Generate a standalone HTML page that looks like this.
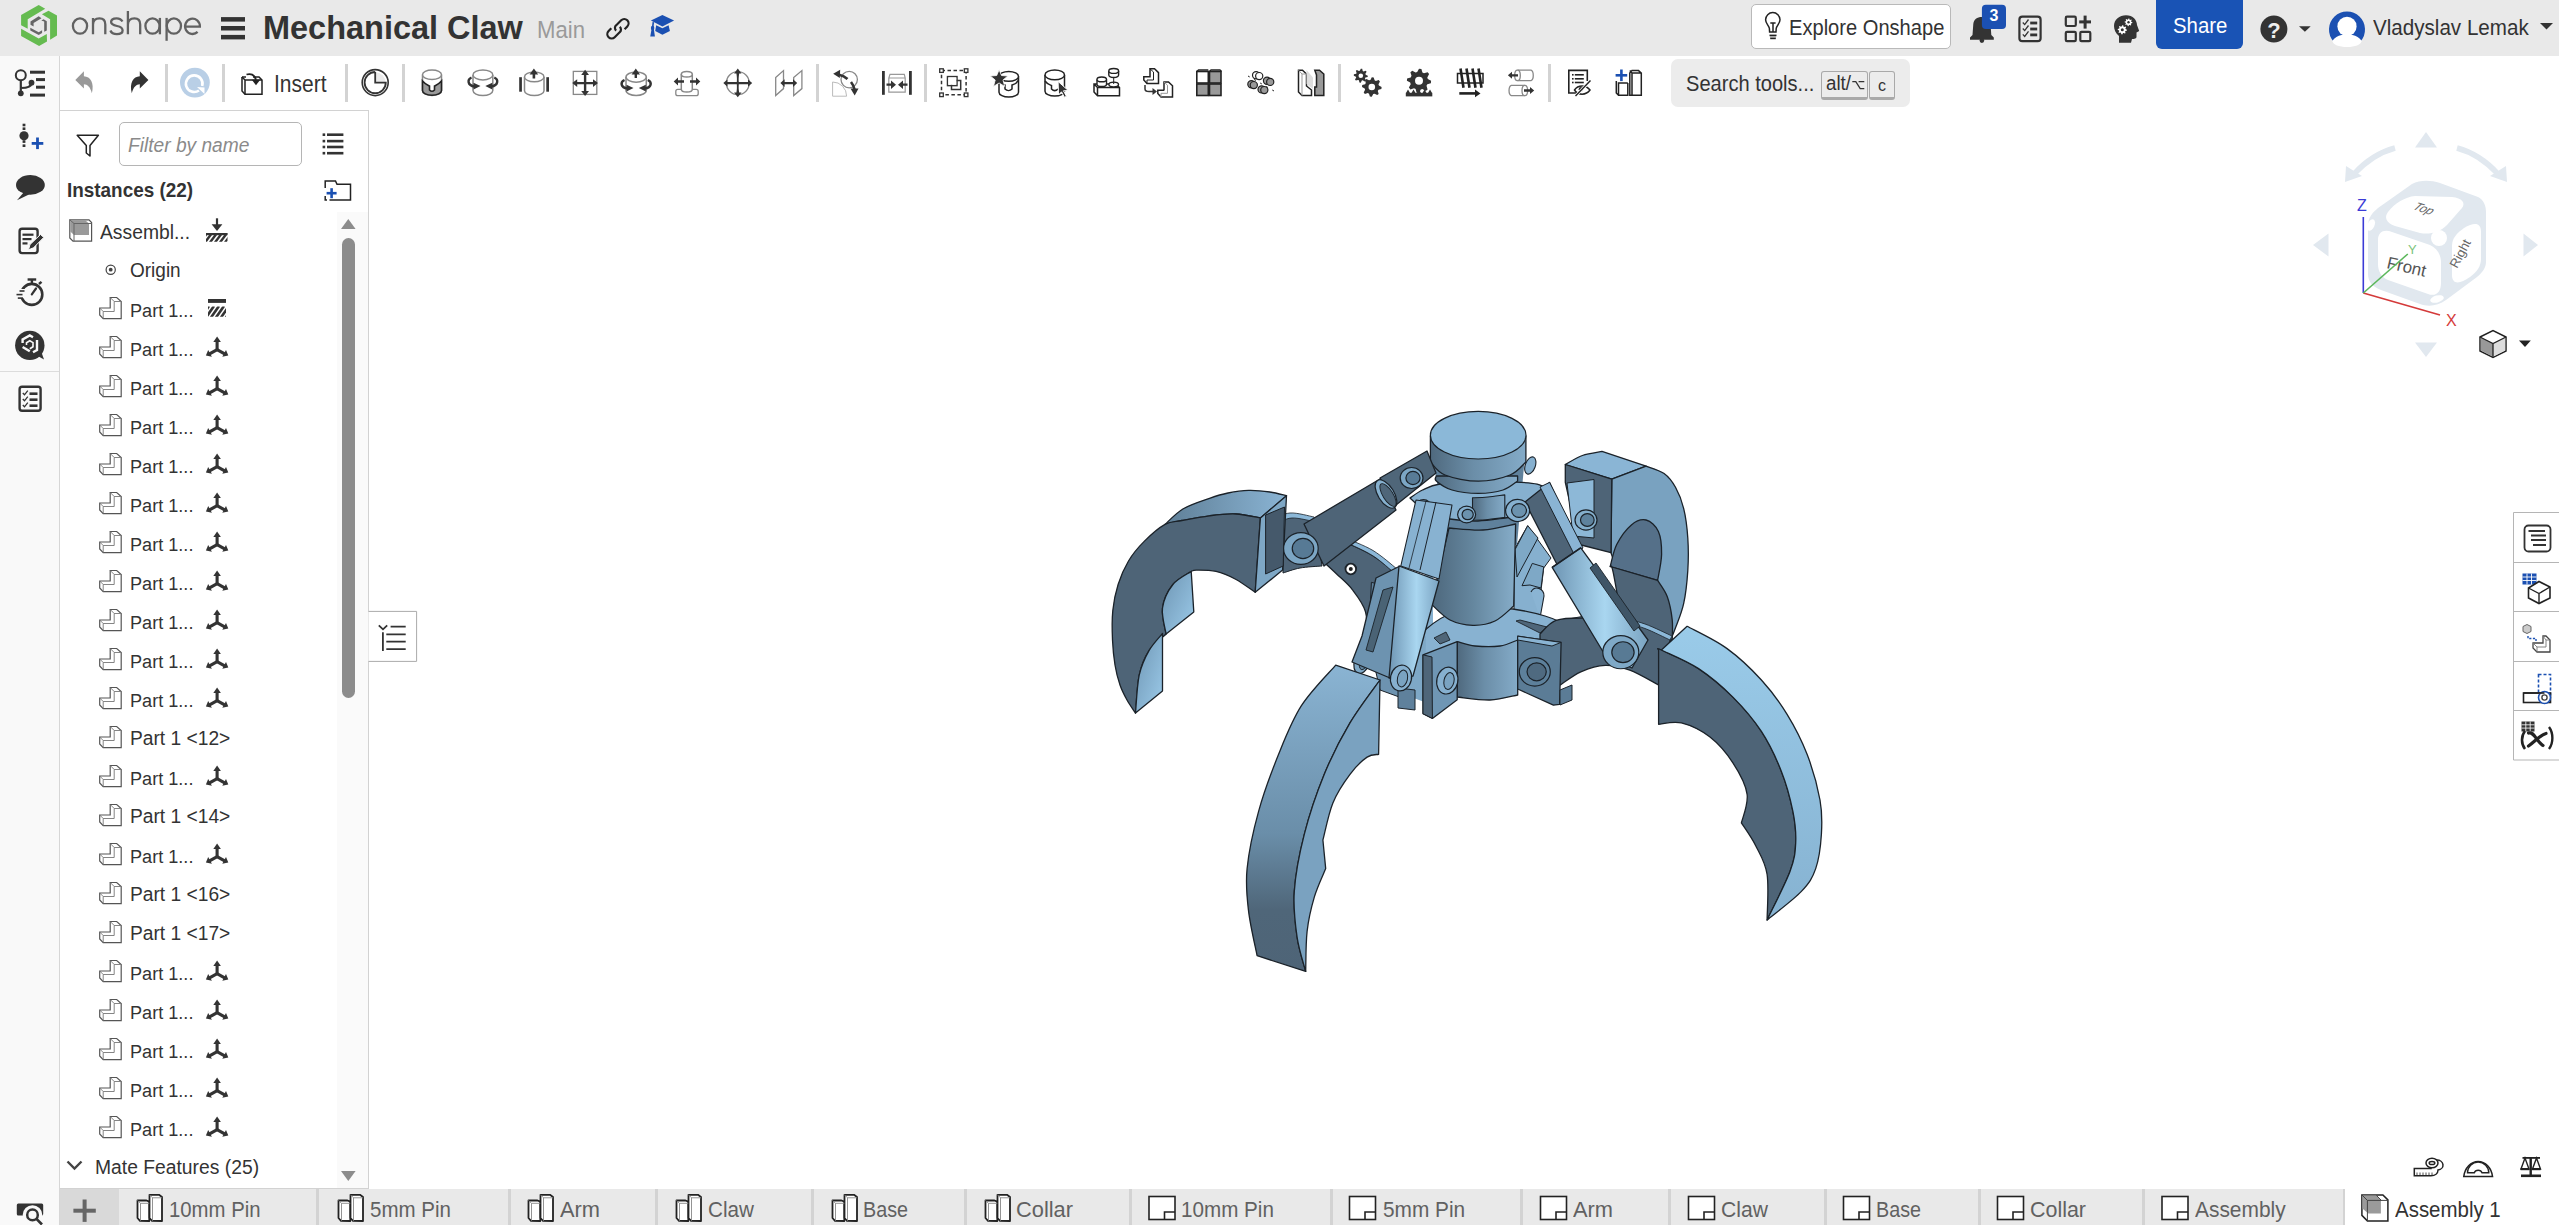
<!DOCTYPE html>
<html><head><meta charset="utf-8">
<style>
*{box-sizing:border-box;margin:0;padding:0}
html,body{width:2559px;height:1225px;overflow:hidden;background:#fff;font-family:"Liberation Sans",sans-serif;color:#333;position:relative}
.a{position:absolute;display:block}
.t{position:absolute;white-space:nowrap;line-height:1;transform-origin:0 0}
</style></head><body>
<div class="a" style="left:0px;top:0px;width:2559px;height:56px;background:#e9e9e9"></div>
<div class="a" style="left:0px;top:56px;width:60px;height:1169px;background:#f9f9f9;border-right:1px solid #d6d6d6"></div>
<div class="a" style="left:0px;top:371px;width:59px;height:1px;background:#dcdcdc"></div>
<div class="a" style="left:60px;top:110px;width:309px;height:1079px;border-top:1px solid #d2d2d2;border-right:1px solid #d2d2d2;border-bottom:1px solid #d2d2d2;background:#fff"></div>
<div class="a" style="left:337px;top:212px;width:31px;height:976px;background:#fafafa"></div>
<div class="a" style="left:60px;top:1189px;width:2499px;height:36px;background:#e9e9e9"></div>
<div class="a" style="left:60px;top:1189px;width:59px;height:36px;background:#d9d9d9"></div>
<div class="a" style="left:165px;top:64px;width:3px;height:38px;background:#d3d3d3"></div>
<div class="a" style="left:222px;top:64px;width:3px;height:38px;background:#d3d3d3"></div>
<div class="a" style="left:345px;top:64px;width:3px;height:38px;background:#d3d3d3"></div>
<div class="a" style="left:402px;top:64px;width:3px;height:38px;background:#d3d3d3"></div>
<div class="a" style="left:816px;top:64px;width:3px;height:38px;background:#d3d3d3"></div>
<div class="a" style="left:924px;top:64px;width:3px;height:38px;background:#d3d3d3"></div>
<div class="a" style="left:1338px;top:64px;width:3px;height:38px;background:#d3d3d3"></div>
<div class="a" style="left:1548px;top:64px;width:3px;height:38px;background:#d3d3d3"></div>
<div class="t" style="left:263.00px;top:10.75px;font-size:32.99px;color:#333;font-weight:bold;font-style:normal;transform:scaleX(0.9844);">Mechanical Claw</div>
<div class="t" style="left:537.00px;top:18.14px;font-size:24.27px;color:#9a9a9a;font-weight:normal;font-style:normal;transform:scaleX(0.9121);">Main</div>
<div class="t" style="left:273.50px;top:72.41px;font-size:23.84px;color:#333;font-weight:normal;font-style:normal;transform:scaleX(0.8806);">Insert</div>
<div class="a" style="left:1671px;top:59px;width:239px;height:48px;background:#ececec;border-radius:7px"></div>
<div class="t" style="left:1686.40px;top:72.62px;font-size:22.53px;color:#333;font-weight:normal;font-style:normal;transform:scaleX(0.8916);">Search tools...</div>
<div class="a" style="left:1821px;top:71px;width:47px;height:29px;background:#ececec;border:1px solid #a9a9a9;border-bottom:3px solid #a9a9a9;border-radius:3px"></div>
<div class="t" style="left:1825.70px;top:73.93px;font-size:19.33px;color:#333;font-weight:normal;font-style:normal;transform:scaleX(0.9694);">alt/</div>
<div class="a" style="left:1869px;top:71px;width:26px;height:29px;background:#ececec;border:1px solid #a9a9a9;border-bottom:3px solid #a9a9a9;border-radius:3px"></div>
<div class="t" style="left:1878.00px;top:76.51px;font-size:16.28px;color:#333;font-weight:normal;font-style:normal;transform:scaleX(0.9829);">c</div>
<div class="a" style="left:1751px;top:4px;width:200px;height:45px;background:#fff;border:1px solid #b9b9b9;border-radius:5px"></div>
<div class="t" style="left:1788.60px;top:17.24px;font-size:22.38px;color:#333;font-weight:normal;font-style:normal;transform:scaleX(0.8985);">Explore Onshape</div>
<div class="a" style="left:2156px;top:0px;width:87px;height:49px;background:#1953b5;border-radius:0 0 6px 6px"></div>
<div class="t" style="left:2172.60px;top:15.04px;font-size:22.38px;color:#fff;font-weight:normal;font-style:normal;transform:scaleX(0.9109);">Share</div>
<div class="t" style="left:2373.00px;top:16.64px;font-size:22.38px;color:#333;font-weight:normal;font-style:normal;transform:scaleX(0.9206);">Vladyslav Lemak</div>
<div class="a" style="left:119px;top:122px;width:183px;height:44px;border:1px solid #b5b5b5;border-radius:5px;background:#fff"></div>
<div class="t" style="left:128.00px;top:136.46px;font-size:19.77px;color:#8a8a8a;font-weight:normal;font-style:italic;transform:scaleX(0.9694);">Filter by name</div>
<div class="t" style="left:66.60px;top:180.00px;font-size:20.78px;color:#333;font-weight:bold;font-style:normal;transform:scaleX(0.9097);">Instances (22)</div>
<div class="t" style="left:99.70px;top:221.96px;font-size:20.35px;color:#333;font-weight:normal;font-style:normal;transform:scaleX(0.9485);">Assembl...</div>
<div class="t" style="left:130.00px;top:261.30px;font-size:19.48px;color:#333;font-weight:normal;font-style:normal;transform:scaleX(0.9757);">Origin</div>
<div class="t" style="left:130.30px;top:300.55px;font-size:19.19px;color:#333;font-weight:normal;font-style:normal;transform:scaleX(0.9439);">Part 1...</div>
<div class="t" style="left:130.30px;top:339.55px;font-size:19.19px;color:#333;font-weight:normal;font-style:normal;transform:scaleX(0.9439);">Part 1...</div>
<div class="t" style="left:130.30px;top:378.55px;font-size:19.19px;color:#333;font-weight:normal;font-style:normal;transform:scaleX(0.9439);">Part 1...</div>
<div class="t" style="left:130.30px;top:417.55px;font-size:19.19px;color:#333;font-weight:normal;font-style:normal;transform:scaleX(0.9439);">Part 1...</div>
<div class="t" style="left:130.30px;top:456.55px;font-size:19.19px;color:#333;font-weight:normal;font-style:normal;transform:scaleX(0.9439);">Part 1...</div>
<div class="t" style="left:130.30px;top:495.55px;font-size:19.19px;color:#333;font-weight:normal;font-style:normal;transform:scaleX(0.9439);">Part 1...</div>
<div class="t" style="left:130.30px;top:534.55px;font-size:19.19px;color:#333;font-weight:normal;font-style:normal;transform:scaleX(0.9439);">Part 1...</div>
<div class="t" style="left:130.30px;top:573.55px;font-size:19.19px;color:#333;font-weight:normal;font-style:normal;transform:scaleX(0.9439);">Part 1...</div>
<div class="t" style="left:130.30px;top:612.55px;font-size:19.19px;color:#333;font-weight:normal;font-style:normal;transform:scaleX(0.9439);">Part 1...</div>
<div class="t" style="left:130.30px;top:651.55px;font-size:19.19px;color:#333;font-weight:normal;font-style:normal;transform:scaleX(0.9439);">Part 1...</div>
<div class="t" style="left:130.30px;top:690.55px;font-size:19.19px;color:#333;font-weight:normal;font-style:normal;transform:scaleX(0.9439);">Part 1...</div>
<div class="t" style="left:129.60px;top:729.26px;font-size:19.77px;color:#333;font-weight:normal;font-style:normal;transform:scaleX(0.9709);">Part 1 &lt;12&gt;</div>
<div class="t" style="left:130.30px;top:768.55px;font-size:19.19px;color:#333;font-weight:normal;font-style:normal;transform:scaleX(0.9439);">Part 1...</div>
<div class="t" style="left:129.60px;top:807.26px;font-size:19.77px;color:#333;font-weight:normal;font-style:normal;transform:scaleX(0.9709);">Part 1 &lt;14&gt;</div>
<div class="t" style="left:130.30px;top:846.55px;font-size:19.19px;color:#333;font-weight:normal;font-style:normal;transform:scaleX(0.9439);">Part 1...</div>
<div class="t" style="left:129.60px;top:885.26px;font-size:19.77px;color:#333;font-weight:normal;font-style:normal;transform:scaleX(0.9709);">Part 1 &lt;16&gt;</div>
<div class="t" style="left:129.60px;top:924.26px;font-size:19.77px;color:#333;font-weight:normal;font-style:normal;transform:scaleX(0.9709);">Part 1 &lt;17&gt;</div>
<div class="t" style="left:130.30px;top:963.55px;font-size:19.19px;color:#333;font-weight:normal;font-style:normal;transform:scaleX(0.9439);">Part 1...</div>
<div class="t" style="left:130.30px;top:1002.55px;font-size:19.19px;color:#333;font-weight:normal;font-style:normal;transform:scaleX(0.9439);">Part 1...</div>
<div class="t" style="left:130.30px;top:1041.55px;font-size:19.19px;color:#333;font-weight:normal;font-style:normal;transform:scaleX(0.9439);">Part 1...</div>
<div class="t" style="left:130.30px;top:1080.55px;font-size:19.19px;color:#333;font-weight:normal;font-style:normal;transform:scaleX(0.9439);">Part 1...</div>
<div class="t" style="left:130.30px;top:1119.55px;font-size:19.19px;color:#333;font-weight:normal;font-style:normal;transform:scaleX(0.9439);">Part 1...</div>
<div class="t" style="left:95.20px;top:1158.33px;font-size:19.91px;color:#333;font-weight:normal;font-style:normal;transform:scaleX(0.9692);">Mate Features (25)</div>
<div class="a" style="left:342px;top:238px;width:13px;height:460px;background:#8c8c8c;border-radius:7px"></div>
<div class="t" style="left:168.70px;top:1200.08px;font-size:21.51px;color:#616161;font-weight:normal;font-style:normal;transform:scaleX(0.9458);">10mm Pin</div>
<div class="a" style="left:316px;top:1189px;width:3px;height:36px;background:#d3d3d3"></div>
<div class="t" style="left:370.00px;top:1200.08px;font-size:21.51px;color:#616161;font-weight:normal;font-style:normal;transform:scaleX(0.9545);">5mm Pin</div>
<div class="a" style="left:508px;top:1189px;width:3px;height:36px;background:#d3d3d3"></div>
<div class="t" style="left:560.00px;top:1200.08px;font-size:21.51px;color:#616161;font-weight:normal;font-style:normal;transform:scaleX(1.0144);">Arm</div>
<div class="a" style="left:655px;top:1189px;width:3px;height:36px;background:#d3d3d3"></div>
<div class="t" style="left:708.00px;top:1200.08px;font-size:21.51px;color:#616161;font-weight:normal;font-style:normal;transform:scaleX(0.9606);">Claw</div>
<div class="a" style="left:811px;top:1189px;width:3px;height:36px;background:#d3d3d3"></div>
<div class="t" style="left:863.00px;top:1200.08px;font-size:21.51px;color:#616161;font-weight:normal;font-style:normal;transform:scaleX(0.9179);">Base</div>
<div class="a" style="left:964px;top:1189px;width:3px;height:36px;background:#d3d3d3"></div>
<div class="t" style="left:1016.00px;top:1200.08px;font-size:21.51px;color:#616161;font-weight:normal;font-style:normal;transform:scaleX(1.0144);">Collar</div>
<div class="a" style="left:1129px;top:1189px;width:3px;height:36px;background:#d3d3d3"></div>
<div class="t" style="left:1181.00px;top:1200.08px;font-size:21.51px;color:#616161;font-weight:normal;font-style:normal;transform:scaleX(0.9603);">10mm Pin</div>
<div class="a" style="left:1330px;top:1189px;width:3px;height:36px;background:#d3d3d3"></div>
<div class="t" style="left:1382.60px;top:1200.08px;font-size:21.51px;color:#616161;font-weight:normal;font-style:normal;transform:scaleX(0.9686);">5mm Pin</div>
<div class="a" style="left:1520px;top:1189px;width:3px;height:36px;background:#d3d3d3"></div>
<div class="t" style="left:1573.00px;top:1200.08px;font-size:21.51px;color:#616161;font-weight:normal;font-style:normal;transform:scaleX(1.0144);">Arm</div>
<div class="a" style="left:1668px;top:1189px;width:3px;height:36px;background:#d3d3d3"></div>
<div class="t" style="left:1721.00px;top:1200.08px;font-size:21.51px;color:#616161;font-weight:normal;font-style:normal;transform:scaleX(0.9815);">Claw</div>
<div class="a" style="left:1824px;top:1189px;width:3px;height:36px;background:#d3d3d3"></div>
<div class="t" style="left:1876.00px;top:1200.08px;font-size:21.51px;color:#616161;font-weight:normal;font-style:normal;transform:scaleX(0.9179);">Base</div>
<div class="a" style="left:1978px;top:1189px;width:3px;height:36px;background:#d3d3d3"></div>
<div class="t" style="left:2030.00px;top:1200.08px;font-size:21.51px;color:#616161;font-weight:normal;font-style:normal;transform:scaleX(0.9966);">Collar</div>
<div class="a" style="left:2142px;top:1189px;width:3px;height:36px;background:#d3d3d3"></div>
<div class="t" style="left:2195.00px;top:1200.08px;font-size:21.51px;color:#616161;font-weight:normal;font-style:normal;transform:scaleX(0.9726);">Assembly</div>
<div class="a" style="left:2343px;top:1189px;width:3px;height:36px;background:#d3d3d3"></div>
<div class="a" style="left:2345px;top:1189px;width:214px;height:36px;background:#fff"></div>
<div class="t" style="left:2395.20px;top:1200.08px;font-size:21.51px;color:#333;font-weight:normal;font-style:normal;transform:scaleX(0.9517);">Assembly 1</div>
<svg class="a" style="left:0;top:0" width="2559" height="60" viewBox="0 0 2559 60"><polygon fill="#65bb50" points="21.1,15.1 38.7,4.9 45.2,8.8 27.7,19.2 27.7,28.8 21.1,25.3"/><polygon fill="#65bb50" points="41.9,14.3 48.5,10.8 57.0,15.5 57.0,35.5 50.1,39.8 50.1,19.2"/><polygon fill="#65bb50" points="21.1,28.8 38.7,38.4 46.8,33.9 47.0,41.6 39.1,46.1 21.1,35.9"/><polygon fill="#666" points="30.5,21.6 38.7,16.3 41.5,18.2 33.6,22.9 33.6,26.5 30.5,24.7"/><polygon fill="#666" points="41.3,20.6 43.6,19.2 46.8,21.2 46.8,30.4 44.2,31.8 44.2,21.6"/><polygon fill="#666" points="30.3,27.8 38.7,32.2 42.1,30.2 42.1,33.1 38.7,35.1 30.3,30.4"/><g fill="none" stroke="#616161" stroke-width="2.3"><ellipse cx="80" cy="26.05" rx="7.1" ry="7.65"/><path d="M93,34.3 L93,17.9 M93,24.8 C93,20.3 96,18.4 99.5,18.4 C103,18.4 105.3,20.5 105.3,24.5 L105.3,34.3"/><path d="M122.4,21.6 C121.4,19.4 119.3,18.3 116.6,18.3 C113.3,18.3 111.1,19.7 111.1,22 C111.1,24.6 113.9,25.3 117,26 C120.3,26.7 122.6,27.8 122.6,30.5 C122.6,33 120.3,34.1 116.9,34.1 C113.7,34.1 111.3,32.8 110.4,30.5"/><path d="M127.9,11 L127.9,34.3 M127.9,24.8 C127.9,20.3 131,18.4 134.5,18.4 C138,18.4 140.2,20.5 140.2,24.5 L140.2,34.3"/><ellipse cx="152.5" cy="26.05" rx="7.1" ry="7.65"/><path d="M159.9,17.9 L159.9,34.3"/><ellipse cx="173.9" cy="26.05" rx="7.1" ry="7.65"/><path d="M166.6,17.9 L166.6,40.8"/><path d="M185.1,26.6 L199.9,26.6 A7.4,7.65 0 1 0 197.6,31.9"/></g><rect x="221" y="17.1" width="24" height="4.5" fill="#333"/><rect x="221" y="26" width="24" height="4.5" fill="#333"/><rect x="221" y="34.9" width="24" height="4.5" fill="#333"/><g fill="none" stroke="#222" stroke-width="2.2" stroke-linecap="butt"><path d="M624.6,29.2 L627.3,26.4 A4.3,4.3 0 0 0 621.2,20.3 L616.3,25.2 A3.4,3.4 0 0 0 616.2,30.6"/><path d="M611.3,28.3 L608.6,31.1 A4.3,4.3 0 0 0 614.7,37.2 L619.6,32.3 A3.4,3.4 0 0 0 619.7,26.9"/></g><polygon fill="#1b50b2" points="650.9,20.4 662.4,14.9 674.1,20.4 662.4,26.4"/><polygon fill="#1b50b2" points="656.2,25.3 662.4,28.3 668.6,25.3 669.9,30.9 662.4,34.8 655.2,30.9"/><path d="M653.3,22.2 L652.6,28 L651.2,35.8 L654,35.8 L652.9,28" stroke="#1b50b2" stroke-width="1.6" fill="#1b50b2"/><ellipse cx="652.6" cy="28" rx="1.7" ry="2.2" fill="#1b50b2"/><g fill="none" stroke="#222" stroke-width="1.5"><path d="M1769.6,32 L1769.4,28.5 C1769,25.5 1765.6,23.5 1765.6,19.8 A7.2,7.2 0 0 1 1780,19.8 C1780,23.5 1776.6,25.5 1776.2,28.5 L1776,32 Z"/><path d="M1770.3,23 L1775.6,23 M1773,23 L1773,32"/></g><rect x="1769.5" y="34.6" width="7" height="1.6" fill="#222"/><rect x="1770" y="36.3" width="6" height="1.3" fill="#999"/><rect x="1770.2" y="37.7" width="5.6" height="1.5" fill="#222"/><path d="M1970,39.7 L1970,37.5 L1972.5,35 L1973.3,24 C1973.8,19.5 1977,17 1981.9,17 C1986.8,17 1990,19.5 1990.5,24 L1991.3,35 L1993.8,37.5 L1993.8,39.7 Z" fill="#333"/><circle cx="1981.9" cy="40.6" r="2.3" fill="#333"/><rect x="1981.9" y="4.8" width="24.1" height="24.2" rx="4" fill="#1b50b2"/><text x="1994" y="21" font-family="Liberation Sans" font-weight="bold" font-size="16" fill="#fff" text-anchor="middle">3</text><rect x="2019.4" y="16.7" width="21.2" height="24.5" rx="3" fill="none" stroke="#333" stroke-width="2.2"/><path d="M2022.8,22.5 L2024.7,24.6 L2028.5,19.5" fill="none" stroke="#333" stroke-width="1.3"/><rect x="2030.2" y="21.6" width="7" height="2.8" fill="#333"/><path d="M2022.8,28.5 L2024.7,30.6 L2028.5,25.5" fill="none" stroke="#333" stroke-width="1.3"/><rect x="2030.2" y="27.6" width="7" height="2.8" fill="#333"/><path d="M2022.8,34.4 L2024.7,36.5 L2028.5,31.4" fill="none" stroke="#333" stroke-width="1.3"/><rect x="2030.2" y="33.5" width="7" height="2.8" fill="#333"/><rect x="2065.7999999999997" y="16.7" width="10" height="9.3" rx="1.2" fill="none" stroke="#333" stroke-width="2.2"/><rect x="2065.7999999999997" y="31.900000000000002" width="10" height="9.3" rx="1.2" fill="none" stroke="#333" stroke-width="2.2"/><rect x="2080.2999999999997" y="31.900000000000002" width="10" height="9.3" rx="1.2" fill="none" stroke="#333" stroke-width="2.2"/><rect x="2079.2" y="20.4" width="11.8" height="3" fill="#333"/><rect x="2083.6" y="15.6" width="3" height="13" fill="#333"/><path d="M2119,42.7 L2119,36 C2115.5,33 2114,29.5 2114,26 C2114,19.5 2119.5,15.2 2126,15.2 C2133,15.2 2137,20 2137,25 L2139.2,31 L2136.5,32.5 L2136.5,37 C2136.5,38.5 2134.5,39 2132,39 L2131,42.7 Z" fill="#333"/><polygon fill="#fff" points="2126.9,29.8 2126.8,30.7 2125.4,31.1 2125.1,31.7 2125.6,33.1 2124.9,33.6 2123.6,32.9 2123.0,33.1 2122.3,34.4 2121.4,34.3 2121.0,32.9 2120.4,32.6 2119.0,33.1 2118.5,32.4 2119.2,31.1 2119.0,30.5 2117.7,29.8 2117.8,28.9 2119.2,28.5 2119.5,27.9 2119.0,26.5 2119.7,26.0 2121.0,26.7 2121.6,26.5 2122.3,25.2 2123.2,25.3 2123.6,26.7 2124.2,27.0 2125.6,26.5 2126.1,27.2 2125.4,28.5 2125.6,29.1"/><circle cx="2122.3" cy="29.8" r="1.5" fill="#333"/><polygon fill="#fff" points="2132.4,22.3 2132.3,23.1 2131.1,23.4 2130.8,23.9 2131.3,25.1 2130.7,25.5 2129.6,24.9 2129.0,25.0 2128.5,26.2 2127.7,26.1 2127.4,24.9 2126.9,24.6 2125.7,25.1 2125.3,24.5 2125.9,23.4 2125.8,22.8 2124.6,22.3 2124.7,21.5 2125.9,21.2 2126.2,20.7 2125.7,19.5 2126.3,19.1 2127.4,19.7 2128.0,19.6 2128.5,18.4 2129.3,18.5 2129.6,19.7 2130.1,20.0 2131.3,19.5 2131.7,20.1 2131.1,21.2 2131.2,21.8"/><circle cx="2128.5" cy="22.3" r="1.2" fill="#333"/><circle cx="2273.9" cy="29" r="13.5" fill="#333"/><text x="2274" y="37.5" font-family="Liberation Sans" font-weight="bold" font-size="22" fill="#eee" text-anchor="middle">?</text><polygon fill="#333" points="2299,26.2 2310.7,26.2 2304.9,31.8"/><clipPath id="avc"><circle cx="2347" cy="28.3" r="18"/></clipPath><path d="M2333.5,41.5 A18,18 0 1 1 2360.5,41.5 Z" fill="#1b50b2"/><circle cx="2347" cy="26.4" r="9.6" fill="#fff"/><path d="M2332.3,41 C2334.5,37.5 2338,35.5 2341.5,35 L2352.5,35 C2356,35.5 2359.5,37.5 2361.7,41 C2361,44.8 2355,47 2347,47 C2339,47 2333,44.8 2332.3,41 Z" fill="#fff"/><polygon fill="#333" points="2540,23 2553,23 2546.5,29.4"/></svg>
<svg class="a" style="left:0;top:56px" width="1700" height="1169" viewBox="0 56 1700 1169"><circle cx="20.8" cy="75.3" r="5" fill="none" stroke="#333" stroke-width="2"/><path d="M20.8,80.3 L20.8,93 M20.8,88 C25,88 31.5,87 31.5,82.7" fill="none" stroke="#333" stroke-width="2.2"/><circle cx="20.8" cy="93.3" r="2.9" fill="#333"/><circle cx="31.5" cy="82.7" r="2.9" fill="#333"/><rect x="30" y="70.7" width="15" height="3" fill="#333"/><rect x="36" y="78.1" width="9" height="3" fill="#333"/><rect x="36" y="85.7" width="9" height="3" fill="#333"/><rect x="30" y="93.6" width="15" height="3" fill="#333"/><rect x="22.6" y="123.7" width="2.8" height="2.6" fill="#333"/><rect x="22.6" y="127.4" width="2.8" height="2.6" fill="#333"/><rect x="22.6" y="140.3" width="2.8" height="2.6" fill="#333"/><rect x="22.6" y="144.4" width="2.8" height="2.6" fill="#333"/><circle cx="24" cy="135.8" r="4.6" fill="#333"/><rect x="31.7" y="142" width="11.6" height="2.8" fill="#1b50b2"/><rect x="36.1" y="137.5" width="2.8" height="11.6" fill="#1b50b2"/><ellipse cx="30.4" cy="184.9" rx="14.4" ry="9.8" fill="#333"/><path d="M24,192 L17,200.2 L30,194 Z" fill="#333"/><rect x="19.6" y="228.7" width="18" height="24.4" rx="2.5" fill="none" stroke="#333" stroke-width="2.4"/><rect x="22.5" y="233.6" width="11" height="2.2" fill="#333"/><rect x="22.5" y="238" width="9" height="2.2" fill="#333"/><rect x="22.5" y="242.3" width="5" height="2.2" fill="#333"/><path d="M28.5,249.8 L30,244.5 L40.5,234.5 L43.8,237.4 L33.5,247.8 Z" fill="#333" stroke="#f9f9f9" stroke-width="1"/><circle cx="31.8" cy="294.4" r="10.5" fill="none" stroke="#333" stroke-width="2.6"/><rect x="27.6" y="278.3" width="8.6" height="2.4" fill="#333"/><rect x="30.7" y="279.5" width="2.4" height="4" fill="#333"/><path d="M39,284 L41.5,281.8" stroke="#333" stroke-width="2.4"/><path d="M31.8,294.4 L36,288.5" stroke="#333" stroke-width="2.2" stroke-linecap="round"/><rect x="14" y="289" width="12" height="9" fill="#f9f9f9"/><rect x="19.5" y="290.2" width="5.0" height="1.6" fill="#333"/><rect x="16.5" y="293.8" width="6.0" height="1.6" fill="#333"/><rect x="17.8" y="297.3" width="5.199999999999999" height="1.6" fill="#333"/><circle cx="29.8" cy="345.4" r="14.7" fill="#333"/><path d="M36,355 L44,359.6 L41,351 Z" fill="#333"/><g fill="none" stroke="#f9f9f9" stroke-width="2.4"><path d="M22.6,343 L22.6,339.5 L29.8,335.4 L33,337.2"/><path d="M37,340 L37,350 L33,352.2"/><path d="M22.6,347 L29.8,351.3"/></g><g fill="none" stroke="#f9f9f9" stroke-width="1.6"><path d="M26.5,345 L26.5,342.8 L29.8,340.8 L33,342.6 L33,346.8 L29.8,348.8"/></g><rect x="19.6" y="386.7" width="21" height="24" rx="2.5" fill="none" stroke="#333" stroke-width="2.4"/><path d="M22.8,393 L24.5,394.8 L27.8,390.6" fill="none" stroke="#333" stroke-width="1.3"/><rect x="29.5" y="392.4" width="8" height="2.6" fill="#333"/><path d="M22.8,399 L24.5,400.8 L27.8,396.6" fill="none" stroke="#333" stroke-width="1.3"/><rect x="29.5" y="398.4" width="8" height="2.6" fill="#333"/><path d="M22.8,405 L24.5,406.8 L27.8,402.6" fill="none" stroke="#333" stroke-width="1.3"/><rect x="29.5" y="404.4" width="8" height="2.6" fill="#333"/><rect x="16.8" y="1203.6" width="26.4" height="11.8" rx="1.5" fill="#333"/><circle cx="32.5" cy="1215" r="9.8" fill="#f9f9f9"/><circle cx="32.5" cy="1214.9" r="5.3" fill="none" stroke="#333" stroke-width="2.5"/><path d="M36.2,1218.6 L42,1224.5" stroke="#333" stroke-width="2.7"/><path d="M75.3,79.9 L83.9,71.3 L83.9,76.2 C90.5,76.5 94.5,83 91.9,93.2 C90.2,87 87.5,84.3 83.9,84.3 L83.9,88.6 Z" fill="#999"/><path d="M75.3,79.9 L83.9,71.3 L83.9,76.2 C90.5,76.5 94.5,83 91.9,93.2 C90.2,87 87.5,84.3 83.9,84.3 L83.9,88.6 Z" fill="#333" transform="translate(223.7,0) scale(-1,1)"/><circle cx="194.9" cy="82.6" r="14.9" fill="#b9cfe6"/><path d="M199,90.5 A8.3,8.3 0 1 1 202.2,86" fill="none" stroke="#fff" stroke-width="2.6"/><polygon fill="#fff" points="197,87 204.5,94 204.5,87.5"/><g fill="none" stroke="#222" stroke-width="1.5"><path d="M242,77 L242,91 L245,94.2 L262,94.2 L262,80 L259,77 L253,77"/><path d="M245,94.2 L245,80 L242,77 M245,80 L262,80"/><path d="M246,77 L242,77"/></g><path d="M246.5,74.5 C250.5,73.3 254.5,74.3 256,79.8" fill="none" stroke="#222" stroke-width="1.8"/><polygon fill="#222" points="251.8,79.8 260.2,79.8 256,85.3"/><circle cx="375.2" cy="82.6" r="13" fill="none" stroke="#333" stroke-width="1.6"/><path d="M375.2,72.2 A10.4,10.4 0 0 1 385.6,82.6 L375.2,82.6 Z" fill="#eaeaea"/><path d="M375.2,72 L375.2,82.6 L385.8,82.6 A10.6,10.6 0 1 1 375.2,72" fill="none" stroke="#333" stroke-width="1.8"/><path d="M422.5,74.75 L422.5,90.75 A9.5,4.75 0 0 0 441.5,90.75 L441.5,74.75" fill="#fff" stroke="#888" stroke-width="1.5"/><ellipse cx="432.0" cy="74.75" rx="9.5" ry="4.75" fill="#fff" stroke="#888" stroke-width="1.5"/><path d="M422.5,81 L422.5,90.5 A9.5,4.8 0 0 0 441.5,90.5 L441.5,81 C439,84 436.5,85 434.5,86 L434.5,90 C433,91.5 431,91.5 429.5,90 L429.5,86 C427.5,85 425,84 422.5,81 Z" fill="#999" stroke="#222" stroke-width="1.6"/><path d="M473,74.95 L473,90.55 A9.900000000000006,4.950000000000003 0 0 0 492.8,90.55 L492.8,74.95" fill="#fff" stroke="#888" stroke-width="1.5"/><ellipse cx="482.9" cy="74.95" rx="9.900000000000006" ry="4.950000000000003" fill="#fff" stroke="#888" stroke-width="1.5"/><path d="M471.5,77.5 C467,79.5 467.5,85.5 474.5,86.5" fill="none" stroke="#333" stroke-width="2.4"/><polygon fill="#333" points="473.5,82.8 480.5,86 473.5,89.6"/><path d="M494.3,77.5 C498.8,79.5 498.3,85.5 491.3,86.5" fill="none" stroke="#333" stroke-width="2.4"/><polygon fill="#333" points="492.3,82.8 485.3,86 492.3,89.6"/><path d="M524.5,76.875 L524.5,90.625 A9.75,4.875 0 0 0 544,90.625 L544,76.875" fill="#fff" stroke="#888" stroke-width="1.5"/><ellipse cx="534.25" cy="76.875" rx="9.75" ry="4.875" fill="#fff" stroke="#888" stroke-width="1.5"/><rect x="519.2" y="77.2" width="2.7" height="14.5" fill="#333"/><rect x="546.3" y="77.2" width="2.7" height="14.5" fill="#333"/><polygon fill="#333" points="533.9,68.6 538.2,74.5 535.2,74.5 535.2,78.4 532.6,78.4 532.6,74.5 529.6,74.5"/><rect x="573.3" y="71.4" width="23.5" height="23" fill="none" stroke="#888" stroke-width="1.3"/><path d="M585.1,69.8 L589,75 L586.3,75 L586.3,81.9 L593,81.9 L593,79.2 L598,83.1 L593,87 L593,84.3 L586.3,84.3 L586.3,91 L589,91 L585.1,96 L581.2,91 L583.9,91 L583.9,84.3 L577.2,84.3 L577.2,87 L572.2,83.1 L577.2,79.2 L577.2,81.9 L583.9,81.9 L583.9,75 L581.2,75 Z" fill="#333"/><path d="M626,77.07499999999999 L626,90.42500000000001 A10.149999999999977,5.074999999999989 0 0 0 646.3,90.42500000000001 L646.3,77.07499999999999" fill="#fff" stroke="#888" stroke-width="1.5"/><ellipse cx="636.15" cy="77.07499999999999" rx="10.149999999999977" ry="5.074999999999989" fill="#fff" stroke="#888" stroke-width="1.5"/><path d="M624.5,80 C620,82 620.5,87.5 627.5,88.5" fill="none" stroke="#333" stroke-width="2.4"/><polygon fill="#333" points="626.5,84.8 633.5,88 626.5,91.6"/><path d="M647.8,80 C652.3,82 651.8,87.5 644.8,88.5" fill="none" stroke="#333" stroke-width="2.4"/><polygon fill="#333" points="645.8,84.8 638.8,88 645.8,91.6"/><polygon fill="#333" points="635.8,68.6 640,74.5 637,74.5 637,78 634.6,78 634.6,74.5 631.6,74.5"/><rect x="675.8" y="89.4" width="22.4" height="6.3" rx="2" fill="#fff" stroke="#888" stroke-width="1.3"/><path d="M681.3,74.25 L681.3,89.25 A5.5,2.75 0 0 0 692.3,89.25 L692.3,74.25" fill="#fff" stroke="#888" stroke-width="1.5"/><ellipse cx="686.8" cy="74.25" rx="5.5" ry="2.75" fill="#fff" stroke="#888" stroke-width="1.5"/><polygon fill="#333" points="673.7,81.5 678,77.6 678,80.2 684,80.2 684,82.8 678,82.8 678,85.4"/><polygon fill="#333" points="700.3,81.5 696,77.6 696,80.2 690,80.2 690,82.8 696,82.8 696,85.4"/><circle cx="737.8" cy="83.1" r="11.5" fill="none" stroke="#888" stroke-width="1.3"/><path d="M737.8,68.6 L741.5,73.5 L739.2,73.5 C738.6,77 738.6,80 738.8,81.9 L748,81.9 L748,79.5 L752.2,83.1 L748,86.7 L748,84.3 L738.8,84.3 C738.6,87 738.6,90 739.2,92.5 L741.5,92.5 L737.8,97.2 L734.1,92.5 L736.4,92.5 C737,90 737,87 736.8,84.3 L727.5,84.3 L727.5,86.7 L723.3,83.1 L727.5,79.5 L727.5,81.9 L736.8,81.9 C737,80 737,77 736.4,73.5 L734.1,73.5 Z" fill="#333"/><polygon fill="none" stroke="#888" stroke-width="1.3" points="775.7,77.6 783.5,70.6 783.5,88.6 775.7,95.6"/><polygon fill="none" stroke="#888" stroke-width="1.3" points="793.7,77.6 801.9,70.6 801.9,88.6 793.7,95.6"/><path d="M780.4,83.1 L784.6,79.2 L784.6,81.9 L793,81.9 L793,79.2 L797.2,83.1 L793,87 L793,84.3 L784.6,84.3 L784.6,87 Z" fill="#333"/><path d="M832.6,96.2 L832.6,82 A14,14 0 0 1 846.6,96.2 Z" fill="none" stroke="#bbb" stroke-width="1"/><circle cx="849.2" cy="79.6" r="8.2" fill="none" stroke="#888" stroke-width="1.3"/><path d="M838.5,74.5 C843,75.5 845.5,77 847.5,79" fill="none" stroke="#333" stroke-width="2.6"/><polygon fill="#333" points="833.2,73.7 840.2,69.8 839.8,78"/><path d="M851,82 C853,84.5 854,86.5 854.5,89.5" fill="none" stroke="#333" stroke-width="2.6"/><polygon fill="#333" points="850.5,88.5 858.5,88.5 854.7,95.6"/><rect x="882" y="71" width="2.8" height="23.8" fill="#333"/><rect x="909" y="71" width="2.8" height="23.8" fill="#333"/><path d="M888.8,92.2 L888.8,78 L890,74.3 L904.3,74.3 L905.2,78 L905.2,92.2 Z M888.8,78 L905.2,78" fill="#fff" stroke="#999" stroke-width="1.2"/><polygon fill="#333" points="886.5,83.6 891,83.6 891,80.5 896,84.7 891,88.9 891,85.8 886.5,85.8"/><polygon fill="#333" points="907.5,83.6 903,83.6 903,80.5 898,84.7 903,88.9 903,85.8 907.5,85.8"/><rect x="941.5" y="70.6" width="24.6" height="24.2" fill="none" stroke="#333" stroke-width="1.5" stroke-dasharray="3.5,2.5"/><rect x="939.7" y="68.8" width="3.6" height="3.6" fill="#fff" stroke="#333" stroke-width="1.3"/><rect x="964.3000000000001" y="68.8" width="3.6" height="3.6" fill="#fff" stroke="#333" stroke-width="1.3"/><rect x="939.7" y="93.0" width="3.6" height="3.6" fill="#fff" stroke="#333" stroke-width="1.3"/><rect x="964.3000000000001" y="93.0" width="3.6" height="3.6" fill="#fff" stroke="#333" stroke-width="1.3"/><rect x="947.5" y="76.6" width="9.5" height="9" fill="#fff" stroke="#333" stroke-width="1.5"/><rect x="951.5" y="80.5" width="9.2" height="9" fill="none" stroke="#333" stroke-width="1.5"/><rect x="948.3" y="77.4" width="8" height="7.4" fill="#fff"/><path d="M999,76.375 L999,92.125 A9.75,4.875 0 0 0 1018.5,92.125 L1018.5,76.375" fill="#fff" stroke="#222" stroke-width="1.5"/><ellipse cx="1008.75" cy="76.375" rx="9.75" ry="4.875" fill="#fff" stroke="#222" stroke-width="1.5"/><path d="M999,80 C1001,84 1003.5,84.5 1005,85 L1005,89 C1007,91 1010,91 1012,89 L1012,85 C1014,84.5 1016.5,84 1018.5,80" fill="none" stroke="#222" stroke-width="1.5"/><polygon fill="#333" stroke="#fff" stroke-width="0.8" points="999.1,69.8 1001.5,75.5 1007.9,76 1003,80 1004.7,86.4 999.1,83 993.5,86.4 995.2,80 990.3,76 996.7,75.5"/><path d="M1045,74.875 L1045,91.125 A9.75,4.875 0 0 0 1064.5,91.125 L1064.5,74.875" fill="#fff" stroke="#222" stroke-width="1.5"/><ellipse cx="1054.75" cy="74.875" rx="9.75" ry="4.875" fill="#fff" stroke="#222" stroke-width="1.5"/><path d="M1045,81 C1047.5,84.5 1050,85 1051.5,85.5 L1051.5,89 C1053.5,91 1056,91 1058,89" fill="none" stroke="#222" stroke-width="1.5"/><polygon fill="#333" stroke="#fff" stroke-width="1" points="1058.1,81.5 1068.3,90.5 1063.5,90.8 1066.5,96.4 1064.3,97.2 1061.5,91.8 1058.5,95"/><path d="M1094,84 L1094,92 L1097.5,95.7 L1119.5,95.7 L1119.5,87.5 L1116,84 Z M1097.5,95.7 L1097.5,87.5 L1094,84 M1097.5,87.5 L1119.5,87.5" fill="#fff" stroke="#222" stroke-width="1.5"/><path d="M1097,79.375 L1097,84.125 A4.75,2.375 0 0 0 1106.5,84.125 L1106.5,79.375" fill="#fff" stroke="#222" stroke-width="1.4"/><ellipse cx="1101.75" cy="79.375" rx="4.75" ry="2.375" fill="#fff" stroke="#222" stroke-width="1.4"/><ellipse cx="1113.7" cy="84.5" rx="4.8" ry="2.4" fill="#fff" stroke="#222" stroke-width="1.4"/><path d="M1113.7,77 L1113.7,84" stroke="#222" stroke-width="1"/><path d="M1108.8,70.94999999999999 L1108.8,75.05000000000001 A4.899999999999977,2.4499999999999886 0 0 0 1118.6,75.05000000000001 L1118.6,70.94999999999999" fill="#fff" stroke="#222" stroke-width="1.4"/><ellipse cx="1113.6999999999998" cy="70.94999999999999" rx="4.899999999999977" ry="2.4499999999999886" fill="#fff" stroke="#222" stroke-width="1.4"/><path d="M1150,77.5 L1150,68.8 L1154.5,68.8 L1158.5,72.6 L1158.5,83.5 L1147,83.5 L1143.8,80 L1143.8,76.8 L1150,76.8" fill="#fff" stroke="#222" stroke-width="1.5"/><path d="M1147,83.5 L1147,80 L1153.5,80 L1153.5,72 L1150,68.8" fill="none" stroke="#222" stroke-width="1"/><path d="M1164,90.5 L1164,82 L1168.5,82 L1172.5,85.8 L1172.5,97 L1161,97 L1157.8,93.5 L1157.8,90.2 L1164,90.2" fill="#fff" stroke="#222" stroke-width="1.5"/><path d="M1161,97 L1161,93.3 L1167.5,93.3 L1167.5,85.2 L1164,82" fill="none" stroke="#999" stroke-width="1"/><path d="M1145,85 L1145,89 C1145,91 1147,91.5 1149,91.5 L1153,91.5" fill="none" stroke="#333" stroke-width="1.5"/><polygon fill="#333" points="1152.5,88 1157,91.5 1152.5,95"/><g stroke="#222" stroke-width="1.6"><rect x="1196.8" y="71.5" width="11.5" height="11.5" fill="#fff"/><rect x="1209.5" y="71.5" width="11.5" height="11.5" fill="#999"/><rect x="1196.8" y="84" width="11.5" height="11.5" fill="#999"/><rect x="1209.5" y="84" width="11.5" height="11.5" fill="#999"/></g><path d="M1196.8,71.5 L1198.5,70 L1208.3,70 M1209.5,71.5 L1211,70 L1220,70 L1221.5,71.5" fill="none" stroke="#222" stroke-width="1.3"/><circle cx="1256.1" cy="75.3" r="3.6" fill="#fff" stroke="#222" stroke-width="1.2"/><circle cx="1259.2" cy="76.1" r="3.6" fill="#fff" stroke="#222" stroke-width="1.2"/><circle cx="1251.4" cy="84.3" r="3.6" fill="#999" stroke="#222" stroke-width="1.2"/><circle cx="1253.8" cy="85.1" r="3.6" fill="#999" stroke="#222" stroke-width="1.2"/><circle cx="1267" cy="80.8" r="3.6" fill="#999" stroke="#222" stroke-width="1.2"/><circle cx="1270.2" cy="81.9" r="3.6" fill="#999" stroke="#222" stroke-width="1.2"/><circle cx="1261.6" cy="89.4" r="3.6" fill="#999" stroke="#222" stroke-width="1.2"/><circle cx="1264.3" cy="90.1" r="3.6" fill="#999" stroke="#222" stroke-width="1.2"/><path d="M1248,76 L1274,91" stroke="#222" stroke-width="1" stroke-dasharray="2,5"/><path d="M1298.5,70.2 L1302.5,70.2 L1306.5,74 L1306.5,86 L1311.5,90 L1311.5,95.6 L1302,95.6 L1298.5,92 Z" fill="#fff" stroke="#222" stroke-width="1.5"/><path d="M1302,95.6 L1302,74 L1298.5,70.2 M1302,74 L1306.5,74" fill="none" stroke="#999" stroke-width="1"/><polygon fill="#ddd" points="1306.5,70 1313,77.5 1313,89 1306.5,84"/><path d="M1314.8,70.2 L1319.5,70.2 L1323.8,74 L1323.8,95.6 L1314.8,95.6 L1314.8,87 L1316.5,87 L1316.5,75 Z" fill="#999" stroke="#222" stroke-width="1.5"/><polygon fill="#333" points="1367.8,75.7 1367.7,77.1 1365.4,77.6 1365.0,78.5 1365.7,80.6 1364.7,81.5 1362.7,80.3 1361.8,80.6 1360.8,82.7 1359.4,82.6 1358.9,80.3 1358.0,79.9 1355.9,80.6 1355.0,79.6 1356.2,77.6 1355.9,76.7 1353.8,75.7 1353.9,74.3 1356.2,73.8 1356.6,72.9 1355.9,70.8 1356.9,69.9 1358.9,71.1 1359.8,70.8 1360.8,68.7 1362.2,68.8 1362.7,71.1 1363.6,71.5 1365.7,70.8 1366.6,71.8 1365.4,73.8 1365.7,74.7"/><circle cx="1360.8" cy="75.7" r="2.3" fill="#fff"/><polygon fill="#333" points="1381.6,87.0 1381.4,88.9 1378.5,89.8 1377.8,91.0 1378.7,93.9 1377.2,95.1 1374.6,93.7 1373.2,94.1 1371.8,96.8 1369.9,96.6 1369.0,93.7 1367.8,93.0 1364.9,93.9 1363.7,92.4 1365.1,89.8 1364.7,88.4 1362.0,87.0 1362.2,85.1 1365.1,84.2 1365.8,83.0 1364.9,80.1 1366.4,78.9 1369.0,80.3 1370.4,79.9 1371.8,77.2 1373.7,77.4 1374.6,80.3 1375.8,81.0 1378.7,80.1 1379.9,81.6 1378.5,84.2 1378.9,85.6"/><circle cx="1371.8" cy="87" r="3.3" fill="#fff"/><polygon fill="#333" points="1431.1,80.8 1430.9,83.2 1427.3,84.2 1426.5,85.8 1427.6,89.4 1425.7,90.9 1422.4,89.1 1420.8,89.6 1419.0,92.9 1416.6,92.7 1415.6,89.1 1414.0,88.3 1410.4,89.4 1408.9,87.5 1410.7,84.2 1410.2,82.6 1406.9,80.8 1407.1,78.4 1410.7,77.4 1411.5,75.8 1410.4,72.2 1412.3,70.7 1415.6,72.5 1417.2,72.0 1419.0,68.7 1421.4,68.9 1422.4,72.5 1424.0,73.3 1427.6,72.2 1429.1,74.1 1427.3,77.4 1427.8,79.0"/><circle cx="1419" cy="80.8" r="4" fill="#fff"/><rect x="1405.8" y="92.8" width="26.5" height="3.6" fill="#333"/><polygon fill="#333" points="1406,93 1408,89.5 1410,93"/><polygon fill="#333" points="1411.5,93 1413.5,89.5 1415.5,93"/><polygon fill="#333" points="1417,93 1419,89.5 1421,93"/><polygon fill="#333" points="1422.5,93 1424.5,89.5 1426.5,93"/><polygon fill="#333" points="1428,93 1430,89.5 1432,93"/><rect x="1457.5" y="73.5" width="25.5" height="9.5" fill="#fff" stroke="#222" stroke-width="1.5"/><path d="M1460.5,68.5 L1463.5,87.7" stroke="#222" stroke-width="2.6"/><path d="M1466.5,68.5 L1469.5,87.7" stroke="#222" stroke-width="2.6"/><path d="M1472.5,68.5 L1475.5,87.7" stroke="#222" stroke-width="2.6"/><path d="M1478.5,68.5 L1481.5,87.7" stroke="#222" stroke-width="2.6"/><path d="M1459.3,93.4 L1476,93.4" stroke="#222" stroke-width="2.6"/><polygon fill="#222" points="1475,89.5 1480.5,93.4 1475,97.3"/><path d="M1517.5,70.2 L1531,70.2 A2.8,5.3 0 0 1 1531,80.6 L1517.5,80.6" fill="#fff" stroke="#888" stroke-width="1.3"/><ellipse cx="1517.5" cy="75.4" rx="2.8" ry="5.2" fill="#fff" stroke="#888" stroke-width="1.3"/><polygon fill="#333" points="1507.9,75.3 1512,71.8 1512,74.2 1518,74.2 1518,76.5 1512,76.5 1512,78.8"/><path d="M1524.8,85.3 L1511.3,85.3 A2.8,5.3 0 0 0 1511.3,95.7 L1524.8,95.7" fill="#fff" stroke="#888" stroke-width="1.3"/><ellipse cx="1524.8" cy="90.5" rx="2.8" ry="5.2" fill="#fff" stroke="#888" stroke-width="1.3"/><polygon fill="#333" points="1534.2,90.5 1530,87 1530,89.3 1524,89.3 1524,91.7 1530,91.7 1530,94"/><path d="M1576,93 L1568.8,93 L1568.8,70.4 L1587.3,70.4 L1587.3,81" fill="none" stroke="#222" stroke-width="1.6"/><rect x="1572" y="74.0" width="1.6" height="1.6" fill="#222"/><rect x="1574.8" y="74.0" width="9" height="1.6" fill="#222"/><rect x="1572" y="78.0" width="1.6" height="1.6" fill="#222"/><rect x="1574.8" y="78.0" width="9" height="1.6" fill="#222"/><rect x="1572" y="81.7" width="1.6" height="1.6" fill="#222"/><rect x="1574.8" y="81.7" width="9" height="1.6" fill="#222"/><path d="M1574.5,90 C1578,84.5 1586,84.5 1590,90 C1586,95.5 1578,95.5 1574.5,90 Z" fill="#fff" stroke="#222" stroke-width="1.5"/><circle cx="1581" cy="89.3" r="2.3" fill="#222"/><path d="M1575.5,96 L1590.5,80.6" stroke="#fff" stroke-width="3"/><path d="M1575.5,96 L1590.5,80.6" stroke="#222" stroke-width="1.4"/><path d="M1629.8,95.2 L1629.8,73 L1632,70.6 L1638.5,70.6 L1641.3,73 L1641.3,95.2 Z M1632,95.2 L1632,73 L1629.8,70.6 M1632,73 L1641.3,73" fill="#fff" stroke="#222" stroke-width="1.5"/><path d="M1616.3,81 L1616.3,93 L1618.5,95.2 L1627.8,95.2 L1627.8,83 M1618.5,95.2 L1618.5,83 L1627.8,83" fill="#fff" stroke="#222" stroke-width="1.5"/><rect x="1615.6" y="74" width="11.6" height="2.6" fill="#1b50b2"/><rect x="1620.1" y="69.5" width="2.6" height="11.6" fill="#1b50b2"/></svg>
<svg class="a" style="left:0;top:0" width="420" height="1225" viewBox="0 0 420 1225"><path d="M77.2,135.2 L98.4,135.2 L90,145.5 L90,156 L86.3,153 L86.3,145.5 Z" fill="none" stroke="#222" stroke-width="1.5" stroke-linejoin="round"/><rect x="322.6" y="133.39999999999998" width="2.6" height="2.6" fill="#333"/><rect x="327" y="133.39999999999998" width="16.4" height="2.6" fill="#333"/><rect x="322.6" y="139.79999999999998" width="2.6" height="2.6" fill="#333"/><rect x="327" y="139.79999999999998" width="16.4" height="2.6" fill="#333"/><rect x="322.6" y="145.7" width="2.6" height="2.6" fill="#333"/><rect x="327" y="145.7" width="16.4" height="2.6" fill="#333"/><rect x="322.6" y="151.89999999999998" width="2.6" height="2.6" fill="#333"/><rect x="327" y="151.89999999999998" width="16.4" height="2.6" fill="#333"/><path d="M329.5,200 L350.5,200 L350.5,184.3 L337,184.3 L335.5,181 L325.2,181 L325.2,188" fill="none" stroke="#222" stroke-width="1.5"/><path d="M325.2,196 L325.2,200 L327,200" fill="none" stroke="#222" stroke-width="1.5"/><rect x="326.6" y="191.9" width="10" height="2.6" fill="#1b50b2"/><rect x="330.3" y="188.2" width="2.6" height="10" fill="#1b50b2"/><polygon fill="#8c8c8c" points="341,229 355.6,229 348.3,219"/><polygon fill="#8c8c8c" points="341,1171 355.6,1171 348.3,1181"/><path d="M69.8,219.8 L89,219.8 L91.6,222.5 L91.6,241.2 L73,241.2 L69.8,238 Z" fill="#fff" stroke="#555" stroke-width="1.2"/><polygon fill="#9a9a9a" points="70.3,220.3 85.2,220.3 89,223.5 89,235 74,235 70.3,231.5"/><path d="M69.8,219.8 L74,223.5 L74,241.2 M74,223.5 L91.6,223.5" fill="none" stroke="#666" stroke-width="1"/><path d="M217,218.3 L217,226" stroke="#333" stroke-width="2.2"/><polygon fill="#333" points="211.6,224.2 222.4,224.2 217,231"/><rect x="206" y="233" width="21.5" height="2.2" fill="#333"/><clipPath id="hc1"><rect x="206" y="233" width="21.5" height="8.8"/></clipPath><g clip-path="url(#hc1)" stroke="#333" stroke-width="2.4"><path d="M200,242.5 L207,233"/><path d="M205,242.5 L212,233"/><path d="M210,242.5 L217,233"/><path d="M215,242.5 L222,233"/><path d="M220,242.5 L227,233"/><path d="M225,242.5 L232,233"/><path d="M230,242.5 L237,233"/></g><circle cx="110.7" cy="269.7" r="4.6" fill="none" stroke="#444" stroke-width="1.2"/><circle cx="110.7" cy="269.7" r="1.9" fill="#444"/><path d="M110.2,297.5 L116.7,297.5 L121.2,301.5 L121.2,318.7 L103.2,318.7 L99.7,315.0 L99.7,308.0 L110.2,308.0 Z" fill="#fff" stroke="#555" stroke-width="1.2"/><path d="M99.7,308.0 L103.2,311.5 L114.2,311.5 L114.2,301.5 L110.2,297.5 M103.2,311.5 L103.2,318.7 M114.2,301.5 L121.2,301.5" fill="none" stroke="#777" stroke-width="0.9"/><rect x="208" y="299" width="18" height="3.9" fill="#333"/><clipPath id="hc2"><rect x="208" y="306.5" width="18" height="10.3"/></clipPath><g clip-path="url(#hc2)" stroke="#333" stroke-width="2.6"><path d="M201,317.5 L209,306" /><path d="M206,317.5 L214,306" /><path d="M211,317.5 L219,306" /><path d="M216,317.5 L224,306" /><path d="M221,317.5 L229,306" /><path d="M226,317.5 L234,306" /><path d="M231,317.5 L239,306" /></g><path d="M110.2,336.5 L116.7,336.5 L121.2,340.5 L121.2,357.7 L103.2,357.7 L99.7,354.0 L99.7,347.0 L110.2,347.0 Z" fill="#fff" stroke="#555" stroke-width="1.2"/><path d="M99.7,347.0 L103.2,350.5 L114.2,350.5 L114.2,340.5 L110.2,336.5 M103.2,350.5 L103.2,357.7 M114.2,340.5 L121.2,340.5" fill="none" stroke="#777" stroke-width="0.9"/><g stroke="#333" stroke-width="3.1" fill="none"><path d="M217.1,349.9 L217.1,341.4"/><path d="M217.6,349.4 L209.1,354.2"/><path d="M216.6,349.4 L225.1,354.2"/></g><polygon fill="#333" points="213.29999999999998,342.0 220.9,342.0 217.1,336.59999999999997"/><polygon fill="#333" points="205.9,355.5 208.2,350.09999999999997 211.9,356.7"/><polygon fill="#333" points="228.29999999999998,355.5 226.0,350.09999999999997 222.29999999999998,356.7"/><path d="M110.2,375.5 L116.7,375.5 L121.2,379.5 L121.2,396.7 L103.2,396.7 L99.7,393.0 L99.7,386.0 L110.2,386.0 Z" fill="#fff" stroke="#555" stroke-width="1.2"/><path d="M99.7,386.0 L103.2,389.5 L114.2,389.5 L114.2,379.5 L110.2,375.5 M103.2,389.5 L103.2,396.7 M114.2,379.5 L121.2,379.5" fill="none" stroke="#777" stroke-width="0.9"/><g stroke="#333" stroke-width="3.1" fill="none"><path d="M217.1,388.9 L217.1,380.4"/><path d="M217.6,388.4 L209.1,393.2"/><path d="M216.6,388.4 L225.1,393.2"/></g><polygon fill="#333" points="213.29999999999998,381.0 220.9,381.0 217.1,375.59999999999997"/><polygon fill="#333" points="205.9,394.5 208.2,389.09999999999997 211.9,395.7"/><polygon fill="#333" points="228.29999999999998,394.5 226.0,389.09999999999997 222.29999999999998,395.7"/><path d="M110.2,414.5 L116.7,414.5 L121.2,418.5 L121.2,435.7 L103.2,435.7 L99.7,432.0 L99.7,425.0 L110.2,425.0 Z" fill="#fff" stroke="#555" stroke-width="1.2"/><path d="M99.7,425.0 L103.2,428.5 L114.2,428.5 L114.2,418.5 L110.2,414.5 M103.2,428.5 L103.2,435.7 M114.2,418.5 L121.2,418.5" fill="none" stroke="#777" stroke-width="0.9"/><g stroke="#333" stroke-width="3.1" fill="none"><path d="M217.1,427.9 L217.1,419.4"/><path d="M217.6,427.4 L209.1,432.2"/><path d="M216.6,427.4 L225.1,432.2"/></g><polygon fill="#333" points="213.29999999999998,420.0 220.9,420.0 217.1,414.59999999999997"/><polygon fill="#333" points="205.9,433.5 208.2,428.09999999999997 211.9,434.7"/><polygon fill="#333" points="228.29999999999998,433.5 226.0,428.09999999999997 222.29999999999998,434.7"/><path d="M110.2,453.5 L116.7,453.5 L121.2,457.5 L121.2,474.7 L103.2,474.7 L99.7,471.0 L99.7,464.0 L110.2,464.0 Z" fill="#fff" stroke="#555" stroke-width="1.2"/><path d="M99.7,464.0 L103.2,467.5 L114.2,467.5 L114.2,457.5 L110.2,453.5 M103.2,467.5 L103.2,474.7 M114.2,457.5 L121.2,457.5" fill="none" stroke="#777" stroke-width="0.9"/><g stroke="#333" stroke-width="3.1" fill="none"><path d="M217.1,466.9 L217.1,458.4"/><path d="M217.6,466.4 L209.1,471.2"/><path d="M216.6,466.4 L225.1,471.2"/></g><polygon fill="#333" points="213.29999999999998,459.0 220.9,459.0 217.1,453.59999999999997"/><polygon fill="#333" points="205.9,472.5 208.2,467.09999999999997 211.9,473.7"/><polygon fill="#333" points="228.29999999999998,472.5 226.0,467.09999999999997 222.29999999999998,473.7"/><path d="M110.2,492.5 L116.7,492.5 L121.2,496.5 L121.2,513.7 L103.2,513.7 L99.7,510.0 L99.7,503.0 L110.2,503.0 Z" fill="#fff" stroke="#555" stroke-width="1.2"/><path d="M99.7,503.0 L103.2,506.5 L114.2,506.5 L114.2,496.5 L110.2,492.5 M103.2,506.5 L103.2,513.7 M114.2,496.5 L121.2,496.5" fill="none" stroke="#777" stroke-width="0.9"/><g stroke="#333" stroke-width="3.1" fill="none"><path d="M217.1,505.9 L217.1,497.4"/><path d="M217.6,505.4 L209.1,510.2"/><path d="M216.6,505.4 L225.1,510.2"/></g><polygon fill="#333" points="213.29999999999998,498.0 220.9,498.0 217.1,492.59999999999997"/><polygon fill="#333" points="205.9,511.5 208.2,506.09999999999997 211.9,512.6999999999999"/><polygon fill="#333" points="228.29999999999998,511.5 226.0,506.09999999999997 222.29999999999998,512.6999999999999"/><path d="M110.2,531.5 L116.7,531.5 L121.2,535.5 L121.2,552.7 L103.2,552.7 L99.7,549.0 L99.7,542.0 L110.2,542.0 Z" fill="#fff" stroke="#555" stroke-width="1.2"/><path d="M99.7,542.0 L103.2,545.5 L114.2,545.5 L114.2,535.5 L110.2,531.5 M103.2,545.5 L103.2,552.7 M114.2,535.5 L121.2,535.5" fill="none" stroke="#777" stroke-width="0.9"/><g stroke="#333" stroke-width="3.1" fill="none"><path d="M217.1,544.9 L217.1,536.4"/><path d="M217.6,544.4 L209.1,549.1999999999999"/><path d="M216.6,544.4 L225.1,549.1999999999999"/></g><polygon fill="#333" points="213.29999999999998,537.0 220.9,537.0 217.1,531.6"/><polygon fill="#333" points="205.9,550.5 208.2,545.1 211.9,551.6999999999999"/><polygon fill="#333" points="228.29999999999998,550.5 226.0,545.1 222.29999999999998,551.6999999999999"/><path d="M110.2,570.5 L116.7,570.5 L121.2,574.5 L121.2,591.7 L103.2,591.7 L99.7,588.0 L99.7,581.0 L110.2,581.0 Z" fill="#fff" stroke="#555" stroke-width="1.2"/><path d="M99.7,581.0 L103.2,584.5 L114.2,584.5 L114.2,574.5 L110.2,570.5 M103.2,584.5 L103.2,591.7 M114.2,574.5 L121.2,574.5" fill="none" stroke="#777" stroke-width="0.9"/><g stroke="#333" stroke-width="3.1" fill="none"><path d="M217.1,583.9 L217.1,575.4"/><path d="M217.6,583.4 L209.1,588.1999999999999"/><path d="M216.6,583.4 L225.1,588.1999999999999"/></g><polygon fill="#333" points="213.29999999999998,576.0 220.9,576.0 217.1,570.6"/><polygon fill="#333" points="205.9,589.5 208.2,584.1 211.9,590.6999999999999"/><polygon fill="#333" points="228.29999999999998,589.5 226.0,584.1 222.29999999999998,590.6999999999999"/><path d="M110.2,609.5 L116.7,609.5 L121.2,613.5 L121.2,630.7 L103.2,630.7 L99.7,627.0 L99.7,620.0 L110.2,620.0 Z" fill="#fff" stroke="#555" stroke-width="1.2"/><path d="M99.7,620.0 L103.2,623.5 L114.2,623.5 L114.2,613.5 L110.2,609.5 M103.2,623.5 L103.2,630.7 M114.2,613.5 L121.2,613.5" fill="none" stroke="#777" stroke-width="0.9"/><g stroke="#333" stroke-width="3.1" fill="none"><path d="M217.1,622.9 L217.1,614.4"/><path d="M217.6,622.4 L209.1,627.1999999999999"/><path d="M216.6,622.4 L225.1,627.1999999999999"/></g><polygon fill="#333" points="213.29999999999998,615.0 220.9,615.0 217.1,609.6"/><polygon fill="#333" points="205.9,628.5 208.2,623.1 211.9,629.6999999999999"/><polygon fill="#333" points="228.29999999999998,628.5 226.0,623.1 222.29999999999998,629.6999999999999"/><path d="M110.2,648.5 L116.7,648.5 L121.2,652.5 L121.2,669.7 L103.2,669.7 L99.7,666.0 L99.7,659.0 L110.2,659.0 Z" fill="#fff" stroke="#555" stroke-width="1.2"/><path d="M99.7,659.0 L103.2,662.5 L114.2,662.5 L114.2,652.5 L110.2,648.5 M103.2,662.5 L103.2,669.7 M114.2,652.5 L121.2,652.5" fill="none" stroke="#777" stroke-width="0.9"/><g stroke="#333" stroke-width="3.1" fill="none"><path d="M217.1,661.9 L217.1,653.4"/><path d="M217.6,661.4 L209.1,666.1999999999999"/><path d="M216.6,661.4 L225.1,666.1999999999999"/></g><polygon fill="#333" points="213.29999999999998,654.0 220.9,654.0 217.1,648.6"/><polygon fill="#333" points="205.9,667.5 208.2,662.1 211.9,668.6999999999999"/><polygon fill="#333" points="228.29999999999998,667.5 226.0,662.1 222.29999999999998,668.6999999999999"/><path d="M110.2,687.5 L116.7,687.5 L121.2,691.5 L121.2,708.7 L103.2,708.7 L99.7,705.0 L99.7,698.0 L110.2,698.0 Z" fill="#fff" stroke="#555" stroke-width="1.2"/><path d="M99.7,698.0 L103.2,701.5 L114.2,701.5 L114.2,691.5 L110.2,687.5 M103.2,701.5 L103.2,708.7 M114.2,691.5 L121.2,691.5" fill="none" stroke="#777" stroke-width="0.9"/><g stroke="#333" stroke-width="3.1" fill="none"><path d="M217.1,700.9 L217.1,692.4"/><path d="M217.6,700.4 L209.1,705.1999999999999"/><path d="M216.6,700.4 L225.1,705.1999999999999"/></g><polygon fill="#333" points="213.29999999999998,693.0 220.9,693.0 217.1,687.6"/><polygon fill="#333" points="205.9,706.5 208.2,701.1 211.9,707.6999999999999"/><polygon fill="#333" points="228.29999999999998,706.5 226.0,701.1 222.29999999999998,707.6999999999999"/><path d="M110.2,726.5 L116.7,726.5 L121.2,730.5 L121.2,747.7 L103.2,747.7 L99.7,744.0 L99.7,737.0 L110.2,737.0 Z" fill="#fff" stroke="#555" stroke-width="1.2"/><path d="M99.7,737.0 L103.2,740.5 L114.2,740.5 L114.2,730.5 L110.2,726.5 M103.2,740.5 L103.2,747.7 M114.2,730.5 L121.2,730.5" fill="none" stroke="#777" stroke-width="0.9"/><path d="M110.2,765.5 L116.7,765.5 L121.2,769.5 L121.2,786.7 L103.2,786.7 L99.7,783.0 L99.7,776.0 L110.2,776.0 Z" fill="#fff" stroke="#555" stroke-width="1.2"/><path d="M99.7,776.0 L103.2,779.5 L114.2,779.5 L114.2,769.5 L110.2,765.5 M103.2,779.5 L103.2,786.7 M114.2,769.5 L121.2,769.5" fill="none" stroke="#777" stroke-width="0.9"/><g stroke="#333" stroke-width="3.1" fill="none"><path d="M217.1,778.9 L217.1,770.4"/><path d="M217.6,778.4 L209.1,783.1999999999999"/><path d="M216.6,778.4 L225.1,783.1999999999999"/></g><polygon fill="#333" points="213.29999999999998,771.0 220.9,771.0 217.1,765.6"/><polygon fill="#333" points="205.9,784.5 208.2,779.1 211.9,785.6999999999999"/><polygon fill="#333" points="228.29999999999998,784.5 226.0,779.1 222.29999999999998,785.6999999999999"/><path d="M110.2,804.5 L116.7,804.5 L121.2,808.5 L121.2,825.7 L103.2,825.7 L99.7,822.0 L99.7,815.0 L110.2,815.0 Z" fill="#fff" stroke="#555" stroke-width="1.2"/><path d="M99.7,815.0 L103.2,818.5 L114.2,818.5 L114.2,808.5 L110.2,804.5 M103.2,818.5 L103.2,825.7 M114.2,808.5 L121.2,808.5" fill="none" stroke="#777" stroke-width="0.9"/><path d="M110.2,843.5 L116.7,843.5 L121.2,847.5 L121.2,864.7 L103.2,864.7 L99.7,861.0 L99.7,854.0 L110.2,854.0 Z" fill="#fff" stroke="#555" stroke-width="1.2"/><path d="M99.7,854.0 L103.2,857.5 L114.2,857.5 L114.2,847.5 L110.2,843.5 M103.2,857.5 L103.2,864.7 M114.2,847.5 L121.2,847.5" fill="none" stroke="#777" stroke-width="0.9"/><g stroke="#333" stroke-width="3.1" fill="none"><path d="M217.1,856.9 L217.1,848.4"/><path d="M217.6,856.4 L209.1,861.1999999999999"/><path d="M216.6,856.4 L225.1,861.1999999999999"/></g><polygon fill="#333" points="213.29999999999998,849.0 220.9,849.0 217.1,843.6"/><polygon fill="#333" points="205.9,862.5 208.2,857.1 211.9,863.6999999999999"/><polygon fill="#333" points="228.29999999999998,862.5 226.0,857.1 222.29999999999998,863.6999999999999"/><path d="M110.2,882.5 L116.7,882.5 L121.2,886.5 L121.2,903.7 L103.2,903.7 L99.7,900.0 L99.7,893.0 L110.2,893.0 Z" fill="#fff" stroke="#555" stroke-width="1.2"/><path d="M99.7,893.0 L103.2,896.5 L114.2,896.5 L114.2,886.5 L110.2,882.5 M103.2,896.5 L103.2,903.7 M114.2,886.5 L121.2,886.5" fill="none" stroke="#777" stroke-width="0.9"/><path d="M110.2,921.5 L116.7,921.5 L121.2,925.5 L121.2,942.7 L103.2,942.7 L99.7,939.0 L99.7,932.0 L110.2,932.0 Z" fill="#fff" stroke="#555" stroke-width="1.2"/><path d="M99.7,932.0 L103.2,935.5 L114.2,935.5 L114.2,925.5 L110.2,921.5 M103.2,935.5 L103.2,942.7 M114.2,925.5 L121.2,925.5" fill="none" stroke="#777" stroke-width="0.9"/><path d="M110.2,960.5 L116.7,960.5 L121.2,964.5 L121.2,981.7 L103.2,981.7 L99.7,978.0 L99.7,971.0 L110.2,971.0 Z" fill="#fff" stroke="#555" stroke-width="1.2"/><path d="M99.7,971.0 L103.2,974.5 L114.2,974.5 L114.2,964.5 L110.2,960.5 M103.2,974.5 L103.2,981.7 M114.2,964.5 L121.2,964.5" fill="none" stroke="#777" stroke-width="0.9"/><g stroke="#333" stroke-width="3.1" fill="none"><path d="M217.1,973.9 L217.1,965.4"/><path d="M217.6,973.4 L209.1,978.1999999999999"/><path d="M216.6,973.4 L225.1,978.1999999999999"/></g><polygon fill="#333" points="213.29999999999998,966.0 220.9,966.0 217.1,960.6"/><polygon fill="#333" points="205.9,979.5 208.2,974.1 211.9,980.6999999999999"/><polygon fill="#333" points="228.29999999999998,979.5 226.0,974.1 222.29999999999998,980.6999999999999"/><path d="M110.2,999.5 L116.7,999.5 L121.2,1003.5 L121.2,1020.7 L103.2,1020.7 L99.7,1017.0 L99.7,1010.0 L110.2,1010.0 Z" fill="#fff" stroke="#555" stroke-width="1.2"/><path d="M99.7,1010.0 L103.2,1013.5 L114.2,1013.5 L114.2,1003.5 L110.2,999.5 M103.2,1013.5 L103.2,1020.7 M114.2,1003.5 L121.2,1003.5" fill="none" stroke="#777" stroke-width="0.9"/><g stroke="#333" stroke-width="3.1" fill="none"><path d="M217.1,1012.9 L217.1,1004.4"/><path d="M217.6,1012.4 L209.1,1017.1999999999999"/><path d="M216.6,1012.4 L225.1,1017.1999999999999"/></g><polygon fill="#333" points="213.29999999999998,1005.0 220.9,1005.0 217.1,999.6"/><polygon fill="#333" points="205.9,1018.5 208.2,1013.1 211.9,1019.6999999999999"/><polygon fill="#333" points="228.29999999999998,1018.5 226.0,1013.1 222.29999999999998,1019.6999999999999"/><path d="M110.2,1038.5 L116.7,1038.5 L121.2,1042.5 L121.2,1059.7 L103.2,1059.7 L99.7,1056.0 L99.7,1049.0 L110.2,1049.0 Z" fill="#fff" stroke="#555" stroke-width="1.2"/><path d="M99.7,1049.0 L103.2,1052.5 L114.2,1052.5 L114.2,1042.5 L110.2,1038.5 M103.2,1052.5 L103.2,1059.7 M114.2,1042.5 L121.2,1042.5" fill="none" stroke="#777" stroke-width="0.9"/><g stroke="#333" stroke-width="3.1" fill="none"><path d="M217.1,1051.9 L217.1,1043.4"/><path d="M217.6,1051.4 L209.1,1056.2"/><path d="M216.6,1051.4 L225.1,1056.2"/></g><polygon fill="#333" points="213.29999999999998,1044.0 220.9,1044.0 217.1,1038.6000000000001"/><polygon fill="#333" points="205.9,1057.5 208.2,1052.1000000000001 211.9,1058.7"/><polygon fill="#333" points="228.29999999999998,1057.5 226.0,1052.1000000000001 222.29999999999998,1058.7"/><path d="M110.2,1077.5 L116.7,1077.5 L121.2,1081.5 L121.2,1098.7 L103.2,1098.7 L99.7,1095.0 L99.7,1088.0 L110.2,1088.0 Z" fill="#fff" stroke="#555" stroke-width="1.2"/><path d="M99.7,1088.0 L103.2,1091.5 L114.2,1091.5 L114.2,1081.5 L110.2,1077.5 M103.2,1091.5 L103.2,1098.7 M114.2,1081.5 L121.2,1081.5" fill="none" stroke="#777" stroke-width="0.9"/><g stroke="#333" stroke-width="3.1" fill="none"><path d="M217.1,1090.9 L217.1,1082.4"/><path d="M217.6,1090.4 L209.1,1095.2"/><path d="M216.6,1090.4 L225.1,1095.2"/></g><polygon fill="#333" points="213.29999999999998,1083.0 220.9,1083.0 217.1,1077.6000000000001"/><polygon fill="#333" points="205.9,1096.5 208.2,1091.1000000000001 211.9,1097.7"/><polygon fill="#333" points="228.29999999999998,1096.5 226.0,1091.1000000000001 222.29999999999998,1097.7"/><path d="M110.2,1116.5 L116.7,1116.5 L121.2,1120.5 L121.2,1137.7 L103.2,1137.7 L99.7,1134.0 L99.7,1127.0 L110.2,1127.0 Z" fill="#fff" stroke="#555" stroke-width="1.2"/><path d="M99.7,1127.0 L103.2,1130.5 L114.2,1130.5 L114.2,1120.5 L110.2,1116.5 M103.2,1130.5 L103.2,1137.7 M114.2,1120.5 L121.2,1120.5" fill="none" stroke="#777" stroke-width="0.9"/><g stroke="#333" stroke-width="3.1" fill="none"><path d="M217.1,1129.9 L217.1,1121.4"/><path d="M217.6,1129.4 L209.1,1134.2"/><path d="M216.6,1129.4 L225.1,1134.2"/></g><polygon fill="#333" points="213.29999999999998,1122.0 220.9,1122.0 217.1,1116.6000000000001"/><polygon fill="#333" points="205.9,1135.5 208.2,1130.1000000000001 211.9,1136.7"/><polygon fill="#333" points="228.29999999999998,1135.5 226.0,1130.1000000000001 222.29999999999998,1136.7"/><path d="M67.5,1161.5 L74.5,1168.5 L81.5,1161.5" fill="none" stroke="#444" stroke-width="2.4"/><path d="M368.5,611.4 L416.6,611.4 L416.6,661.4 L368.5,661.4" fill="#fff" stroke="#aaa" stroke-width="1"/><path d="M378.8,625.3 L383,629.3 L387.2,625.3" fill="none" stroke="#333" stroke-width="1.8"/><path d="M382.9,632.3 L382.9,651.1 M386.3,634.3 L405.7,634.3 M386.3,641.7 L405.7,641.7 M386.3,649.1 L405.7,649.1 M390.6,626.6 L405.7,626.6" stroke="#333" stroke-width="1.8"/></svg>
<svg class="a" style="left:0;top:1140px" width="2559" height="85" viewBox="0 1140 2559 85"><rect x="82.6" y="1199.5" width="4" height="22.4" fill="#666"/><rect x="73.4" y="1208.7" width="22.4" height="4" fill="#666"/><g fill="#fff" stroke="#222" stroke-width="1.8" stroke-linejoin="round"><path d="M149.3,1221 L149.3,1201.7 L146.5,1200.5 L137.5,1200.5 L137.5,1218 L140,1220.8 Z"/><path d="M162,1221 L162,1197 L159,1194.8 L149.5,1194.8 L149.5,1218 L152,1220.8 Z"/></g><path d="M137.5,1200.5 L140.5,1203.3 L140.5,1220.8 M140.5,1203.3 L149.3,1203.3 M149.5,1194.8 L152.5,1197.8 L152.5,1220.8 M152.5,1197.8 L162,1197.8" fill="none" stroke="#888" stroke-width="0.9"/><g fill="#fff" stroke="#222" stroke-width="1.8" stroke-linejoin="round"><path d="M350.3,1221 L350.3,1201.7 L347.5,1200.5 L338.5,1200.5 L338.5,1218 L341,1220.8 Z"/><path d="M363,1221 L363,1197 L360,1194.8 L350.5,1194.8 L350.5,1218 L353,1220.8 Z"/></g><path d="M338.5,1200.5 L341.5,1203.3 L341.5,1220.8 M341.5,1203.3 L350.3,1203.3 M350.5,1194.8 L353.5,1197.8 L353.5,1220.8 M353.5,1197.8 L363,1197.8" fill="none" stroke="#888" stroke-width="0.9"/><g fill="#fff" stroke="#222" stroke-width="1.8" stroke-linejoin="round"><path d="M540.3,1221 L540.3,1201.7 L537.5,1200.5 L528.5,1200.5 L528.5,1218 L531,1220.8 Z"/><path d="M553,1221 L553,1197 L550,1194.8 L540.5,1194.8 L540.5,1218 L543,1220.8 Z"/></g><path d="M528.5,1200.5 L531.5,1203.3 L531.5,1220.8 M531.5,1203.3 L540.3,1203.3 M540.5,1194.8 L543.5,1197.8 L543.5,1220.8 M543.5,1197.8 L553,1197.8" fill="none" stroke="#888" stroke-width="0.9"/><g fill="#fff" stroke="#222" stroke-width="1.8" stroke-linejoin="round"><path d="M688.3,1221 L688.3,1201.7 L685.5,1200.5 L676.5,1200.5 L676.5,1218 L679,1220.8 Z"/><path d="M701,1221 L701,1197 L698,1194.8 L688.5,1194.8 L688.5,1218 L691,1220.8 Z"/></g><path d="M676.5,1200.5 L679.5,1203.3 L679.5,1220.8 M679.5,1203.3 L688.3,1203.3 M688.5,1194.8 L691.5,1197.8 L691.5,1220.8 M691.5,1197.8 L701,1197.8" fill="none" stroke="#888" stroke-width="0.9"/><g fill="#fff" stroke="#222" stroke-width="1.8" stroke-linejoin="round"><path d="M844.3,1221 L844.3,1201.7 L841.5,1200.5 L832.5,1200.5 L832.5,1218 L835,1220.8 Z"/><path d="M857,1221 L857,1197 L854,1194.8 L844.5,1194.8 L844.5,1218 L847,1220.8 Z"/></g><path d="M832.5,1200.5 L835.5,1203.3 L835.5,1220.8 M835.5,1203.3 L844.3,1203.3 M844.5,1194.8 L847.5,1197.8 L847.5,1220.8 M847.5,1197.8 L857,1197.8" fill="none" stroke="#888" stroke-width="0.9"/><g fill="#fff" stroke="#222" stroke-width="1.8" stroke-linejoin="round"><path d="M997.3,1221 L997.3,1201.7 L994.5,1200.5 L985.5,1200.5 L985.5,1218 L988,1220.8 Z"/><path d="M1010,1221 L1010,1197 L1007,1194.8 L997.5,1194.8 L997.5,1218 L1000,1220.8 Z"/></g><path d="M985.5,1200.5 L988.5,1203.3 L988.5,1220.8 M988.5,1203.3 L997.3,1203.3 M997.5,1194.8 L1000.5,1197.8 L1000.5,1220.8 M1000.5,1197.8 L1010,1197.8" fill="none" stroke="#888" stroke-width="0.9"/><rect x="1149" y="1196.5" width="26" height="23" fill="#fff" stroke="#222" stroke-width="1.6"/><path d="M1164.5,1219.5 L1164.5,1212 L1175,1212" fill="none" stroke="#222" stroke-width="1.6"/><rect x="1349.5" y="1196.5" width="26" height="23" fill="#fff" stroke="#222" stroke-width="1.6"/><path d="M1365.0,1219.5 L1365.0,1212 L1375.5,1212" fill="none" stroke="#222" stroke-width="1.6"/><rect x="1540.5" y="1196.5" width="26" height="23" fill="#fff" stroke="#222" stroke-width="1.6"/><path d="M1556.0,1219.5 L1556.0,1212 L1566.5,1212" fill="none" stroke="#222" stroke-width="1.6"/><rect x="1688.5" y="1196.5" width="26" height="23" fill="#fff" stroke="#222" stroke-width="1.6"/><path d="M1704.0,1219.5 L1704.0,1212 L1714.5,1212" fill="none" stroke="#222" stroke-width="1.6"/><rect x="1843.5" y="1196.5" width="26" height="23" fill="#fff" stroke="#222" stroke-width="1.6"/><path d="M1859.0,1219.5 L1859.0,1212 L1869.5,1212" fill="none" stroke="#222" stroke-width="1.6"/><rect x="1997.5" y="1196.5" width="26" height="23" fill="#fff" stroke="#222" stroke-width="1.6"/><path d="M2013.0,1219.5 L2013.0,1212 L2023.5,1212" fill="none" stroke="#222" stroke-width="1.6"/><rect x="2162" y="1196.5" width="26" height="23" fill="#fff" stroke="#222" stroke-width="1.6"/><path d="M2177.5,1219.5 L2177.5,1212 L2188,1212" fill="none" stroke="#222" stroke-width="1.6"/><path d="M2361.9,1194.9 L2382.9,1194.9 L2387.9,1199.9 L2387.9,1220.9 L2367.4,1220.9 L2361.9,1215.4 Z" fill="#fff" stroke="#222" stroke-width="1.5"/><polygon fill="#9a9a9a" points="2362.4,1195.4 2376.4,1195.4 2380.9,1199.9 2380.9,1213.4 2368.4,1213.4 2362.4,1208.4"/><path d="M2361.9,1194.9 L2367.4,1200.4 L2367.4,1220.9 M2367.4,1200.4 L2387.9,1200.4 M2376.4,1195.4 L2381.4,1200.4" fill="none" stroke="#444" stroke-width="1"/><g fill="#fff" stroke="#222" stroke-width="1.5"><path d="M2414.3,1168.5 L2431,1168.5 L2431,1165 A6,5 0 1 1 2438,1170 C2438,1173.5 2435,1175.8 2431,1175.8 L2414.3,1175.8 Z"/><ellipse cx="2432" cy="1163" rx="6" ry="4.8"/><ellipse cx="2432" cy="1163" rx="2.8" ry="1.6"/></g><g stroke="#222" stroke-width="0.8"><path d="M2417,1175 L2417,1172.5"/><path d="M2420,1175 L2420,1172.5"/><path d="M2423,1175 L2423,1172.5"/><path d="M2426,1175 L2426,1172.5"/><path d="M2429,1175 L2429,1172.5"/><path d="M2432,1175 L2432,1172.5"/></g><path d="M2463.8,1176.5 A14.5,17.5 0 0 1 2492.5,1176.5 Z" fill="#fff" stroke="#222" stroke-width="1.6"/><path d="M2467.5,1172.8 A10.6,10.6 0 0 1 2488.8,1172.8 L2482,1172.8 A4,3.5 0 0 0 2474.3,1172.8 Z" fill="#fff" stroke="#222" stroke-width="1.4"/><g fill="#222"><rect x="2529.5" y="1157" width="2.4" height="18"/><rect x="2521" y="1174.5" width="20" height="2.6"/><rect x="2522.5" y="1157" width="17.5" height="1.8"/><path d="M2521,1169 L2525,1158 L2529,1169 Z M2532.5,1169 L2536.5,1158 L2540.5,1169 Z" fill="none" stroke="#222" stroke-width="1.4"/><rect x="2520.6" y="1168" width="8.6" height="2.2"/><rect x="2532" y="1168" width="8.6" height="2.2"/></g></svg>
<svg class="a" style="left:1080px;top:390px" width="780" height="600" viewBox="1080 390 780 600"><defs>
<linearGradient id="gFLC" x1="0" y1="0" x2="0" y2="1"><stop offset="0" stop-color="#8ab4d3"/><stop offset="0.55" stop-color="#6a8ea9"/><stop offset="0.8" stop-color="#4f6679"/><stop offset="1" stop-color="#4e6477"/></linearGradient>
<linearGradient id="gFRC" x1="0" y1="0" x2="0" y2="1"><stop offset="0" stop-color="#9acbe9"/><stop offset="1" stop-color="#86b2d1"/></linearGradient>
<linearGradient id="gCol" x1="0" y1="0" x2="1" y2="0"><stop offset="0" stop-color="#4d677c"/><stop offset="0.5" stop-color="#65879f"/><stop offset="1" stop-color="#86adc9"/></linearGradient>
<linearGradient id="gCyl" x1="0" y1="0" x2="1" y2="0"><stop offset="0" stop-color="#4f697e"/><stop offset="0.45" stop-color="#6b8ea8"/><stop offset="1" stop-color="#84abc8"/></linearGradient>
<linearGradient id="gSleeve" x1="0" y1="0" x2="1" y2="0"><stop offset="0" stop-color="#6e95b3"/><stop offset="0.55" stop-color="#a9d6f0"/><stop offset="1" stop-color="#7aa3c1"/></linearGradient>
<linearGradient id="gULtop" x1="0" y1="0" x2="1" y2="0"><stop offset="0" stop-color="#5f7f97"/><stop offset="1" stop-color="#8ab4d4"/></linearGradient>
<linearGradient id="gInner" x1="0" y1="0" x2="1" y2="1"><stop offset="0" stop-color="#6d94b2"/><stop offset="1" stop-color="#9ccbea"/></linearGradient>
</defs><path d="M1565.3,464.5 C1568.2,463.0 1576.3,457.7 1582.4,455.5 C1588.5,453.3 1598.7,452.1 1602.0,451.4 L1646.1,466.1 L1611.8,479.2 Z" fill="#8ab5d5" stroke="#1b2229" stroke-width="1.3" stroke-linejoin="round" /><path d="M1611.8,479.2 L1646.1,466.1 C1649.1,467.3 1659.2,470.0 1664.1,473.5 C1669.0,477.0 1672.2,481.4 1675.5,487.3 C1678.8,493.2 1681.7,500.2 1683.7,508.6 C1685.8,517.1 1687.1,527.7 1687.8,538.0 C1688.5,548.3 1688.5,559.7 1687.8,570.6 C1687.1,581.5 1685.8,593.8 1683.7,603.3 C1681.7,612.8 1677.7,621.7 1675.5,627.8 C1673.3,633.9 1671.4,638.0 1670.6,640.0 L1640.0,640.0 L1611.0,552.7 Z" fill="#79a2c0" stroke="#1b2229" stroke-width="1.3" stroke-linejoin="round" /><path d="M1610.2,566.5 C1611.3,562.8 1613.2,551.4 1616.7,544.5 C1620.2,537.6 1626.5,529.0 1631.4,524.9 C1636.3,520.8 1641.6,518.9 1646.1,520.0 C1650.6,521.1 1655.8,525.7 1658.4,531.4 C1661.0,537.1 1661.7,546.1 1661.6,554.3 C1661.5,562.5 1658.3,576.0 1657.6,580.4 L1610.2,566.5 Z" fill="#557089" stroke="#1b2229" stroke-width="1.3" stroke-linejoin="round" /><path d="M1610.2,566.5 L1657.6,580.4 C1659.2,583.1 1664.9,590.2 1667.3,596.7 C1669.7,603.2 1671.4,612.4 1672.2,619.6 C1673.0,626.8 1672.2,636.6 1672.2,640.0 L1625.0,640.0 C1623.1,629.0 1616.0,586.1 1613.5,573.9 C1611.0,561.6 1610.8,567.7 1610.2,566.5 Z" fill="#4e6477" stroke="#1b2229" stroke-width="1.3" stroke-linejoin="round" /><path d="M1565.3,464.5 L1611.8,479.2 L1611.0,552.7 L1579.2,544.5 L1565.3,482.4 L1565.3,464.5 Z" fill="#4e6477" stroke="#1b2229" stroke-width="1.3" stroke-linejoin="round" /><path d="M1567.0,483.0 L1594.0,479.5 L1594.0,538.0 L1573.0,536.0 Z" fill="#8db8d7" stroke="#1b2229" stroke-width="1" stroke-linejoin="round" /><ellipse cx="1586" cy="520" rx="11" ry="10.120000000000001" fill="#84aecb" stroke="#1b2229" stroke-width="1.2" transform="rotate(0 1586 520)"/><ellipse cx="1587.32" cy="520" rx="6.82" ry="6.38" fill="#5e829d" stroke="#1b2229" stroke-width="1.2" transform="rotate(0 1587.32 520)"/><path d="M1318.0,528.0 C1320.0,529.0 1325.3,531.6 1330.0,534.0 C1334.7,536.4 1339.2,539.0 1346.4,542.6 C1353.6,546.2 1364.8,550.6 1372.9,555.8 C1381.0,560.9 1388.7,567.5 1394.9,573.5 C1401.1,579.5 1405.8,585.6 1410.0,592.0 C1414.2,598.4 1418.3,608.7 1420.0,612.0 L1367.0,641.0 C1366.8,636.1 1368.0,620.3 1365.5,611.7 C1363.0,603.1 1357.2,596.0 1352.3,589.6 C1347.4,583.2 1341.7,578.9 1336.1,573.5 C1330.5,568.1 1321.4,560.0 1318.5,557.3 Z" fill="#4e6477" stroke="#1b2229" stroke-width="1.3" stroke-linejoin="round" /><path d="M1344.0,537.5 C1348.8,539.7 1364.2,545.2 1373.0,550.5 C1381.8,555.8 1393.0,565.9 1397.0,569.0 L1394.9,573.5 C1391.2,570.5 1381.0,560.9 1372.9,555.8 C1364.8,550.6 1350.8,544.8 1346.4,542.6 Z" fill="#8cb8d8" stroke="#1b2229" stroke-width="0.8" stroke-linejoin="round" /><ellipse cx="1350.8" cy="569" rx="5.3" ry="5.3" fill="#fff" stroke="#1b2229" stroke-width="1.8" transform="rotate(0 1350.8 569)"/><circle cx="1350.8" cy="569" r="2" fill="#222"/><path d="M1371.4,582.3 L1392.0,588.2 L1392.0,602.9 L1370.0,611.7 Z" fill="#5f819c" stroke="#1b2229" stroke-width="1" stroke-linejoin="round" /><ellipse cx="1375.8" cy="617.5" rx="8" ry="7.36" fill="#7fa8c6" stroke="#1b2229" stroke-width="1.2" transform="rotate(0 1375.8 617.5)"/><ellipse cx="1376.76" cy="617.5" rx="4.96" ry="4.64" fill="#5b7e99" stroke="#1b2229" stroke-width="1.2" transform="rotate(0 1376.76 617.5)"/><path d="M1286.5,495.7 C1283.8,495.1 1276.3,492.9 1270.0,492.0 C1263.7,491.1 1255.6,490.2 1248.6,490.4 C1241.6,490.6 1234.5,491.7 1228.0,493.0 C1221.5,494.3 1217.0,495.7 1209.5,498.3 C1202.0,500.9 1190.7,504.4 1183.3,508.7 C1175.9,513.0 1168.0,521.8 1165.0,524.4 C1167.8,523.8 1174.6,521.9 1182.0,520.5 C1189.4,519.1 1200.6,516.9 1209.5,515.8 C1218.4,514.7 1227.1,513.6 1235.6,514.0 C1244.1,514.4 1256.3,517.2 1260.4,517.9 L1286.5,495.7 Z" fill="url(#gULtop)" stroke="#1b2229" stroke-width="1.3" stroke-linejoin="round" /><path d="M1260.4,517.9 C1256.3,517.2 1244.1,514.4 1235.6,514.0 C1227.1,513.6 1218.4,514.7 1209.5,515.8 C1200.6,516.9 1189.4,519.1 1182.0,520.5 C1174.6,521.9 1171.3,520.9 1165.0,524.4 C1158.7,527.9 1150.3,535.3 1144.2,541.4 C1138.1,547.5 1132.8,553.8 1128.5,561.0 C1124.2,568.2 1120.7,576.2 1118.1,584.5 C1115.5,592.8 1113.7,601.4 1112.8,610.6 C1111.9,619.9 1112.1,630.9 1112.5,640.0 C1112.9,649.1 1113.8,657.5 1115.0,665.0 C1116.2,672.5 1118.0,679.2 1120.0,685.0 C1122.0,690.8 1124.4,695.3 1127.0,700.0 C1129.6,704.7 1134.1,710.9 1135.5,713.1 C1136.1,706.8 1137.0,685.5 1139.2,675.1 C1141.5,664.7 1144.5,657.5 1149.0,650.6 C1153.5,643.8 1163.2,636.8 1166.1,634.0 C1165.5,629.7 1161.4,616.2 1162.5,608.0 C1163.6,599.8 1168.1,590.6 1172.9,584.5 C1177.7,578.4 1188.2,573.6 1191.2,571.4 C1192.1,571.2 1192.3,570.1 1196.4,570.1 C1200.5,570.1 1209.5,569.9 1216.0,571.4 C1222.5,572.9 1229.1,575.7 1235.6,579.2 C1242.1,582.7 1251.9,590.1 1255.2,592.3 L1260.4,517.9 Z" fill="#4e6477" stroke="#1b2229" stroke-width="1.3" stroke-linejoin="round" /><path d="M1191.2,571.4 L1193.8,611.9 L1166.1,634.0 C1165.5,629.7 1161.4,616.2 1162.5,608.0 C1163.6,599.8 1168.1,590.6 1172.9,584.5 C1177.7,578.4 1188.2,573.6 1191.2,571.4 Z" fill="url(#gInner)" stroke="#1b2229" stroke-width="1.3" stroke-linejoin="round" /><path d="M1162.5,633.5 L1162.5,691.0 L1135.5,713.1 C1136.1,706.8 1137.0,685.5 1139.2,675.1 C1141.5,664.7 1145.1,657.5 1149.0,650.6 C1152.9,643.7 1160.2,636.4 1162.5,633.5 Z" fill="url(#gInner)" stroke="#1b2229" stroke-width="1.3" stroke-linejoin="round" /><path d="M1283.0,519.0 C1285.8,518.7 1294.5,516.5 1300.0,517.0 C1305.5,517.5 1313.3,521.2 1316.0,522.0 L1322.0,566.0 C1318.3,566.3 1306.5,566.8 1300.0,568.0 C1293.5,569.2 1285.8,572.2 1283.0,573.0 Z" fill="#4e6477" stroke="#1b2229" stroke-width="1.0" stroke-linejoin="round" /><path d="M1270.0,520.0 C1273.3,518.8 1282.7,513.5 1290.0,513.0 C1297.3,512.5 1310.0,516.3 1314.0,517.0 L1316.0,522.0 C1312.0,521.3 1298.8,517.7 1292.0,518.0 C1285.2,518.3 1277.8,523.0 1275.0,524.0 Z" fill="#8cb8d8" stroke="#1b2229" stroke-width="0.8" stroke-linejoin="round" /><path d="M1260.4,517.9 L1286.5,495.7 L1282.6,570.1 L1255.2,592.3 Z" fill="#7ea7c5" stroke="#1b2229" stroke-width="1.3" stroke-linejoin="round" /><path d="M1265.6,515.0 L1284.5,507.0 L1283.2,566.0 L1265.6,574.0 Z" fill="#45596b" stroke="#1b2229" stroke-width="1" stroke-linejoin="round" /><path d="M1514.0,549.7 L1527.7,525.7 L1551.0,558.0 L1543.7,568.0 C1543.1,573.3 1540.8,591.6 1540.0,600.0 C1539.2,608.4 1539.2,615.2 1539.0,618.3 L1554.0,621.7 L1584.9,616.0 L1592.0,645.0 L1514.0,645.0 Z" fill="#86b0cf" stroke="#1b2229" stroke-width="1.0" stroke-linejoin="round" /><path d="M1515.0,549.7 L1527.7,525.7 L1538.0,538.0 L1517.0,577.0 Z" fill="#7ea8c6" stroke="#1b2229" stroke-width="1" stroke-linejoin="round" /><path d="M1522.0,585.7 L1532.3,563.4 L1543.7,566.9 L1541.0,588.0 L1530.0,585.0 Z" fill="#7ea8c6" stroke="#1b2229" stroke-width="1" stroke-linejoin="round" /><path d="M1531,592 A7,8 0 0 1 1544,596 L1540,618" fill="#8ab4d3" stroke="#1b2229" stroke-width="1.1"/><path d="M1418.0,585.0 L1433.0,565.0 L1433.0,640.0 L1405.0,655.0 Z" fill="#86b0cf" stroke="#1b2229" stroke-width="0" stroke-linejoin="round" /><path d="M1405.0,655.0 C1408.3,650.8 1416.7,637.2 1425.0,630.0 C1433.3,622.8 1442.5,615.7 1455.0,612.0 C1467.5,608.3 1485.0,607.3 1500.0,608.0 C1515.0,608.7 1532.5,612.3 1545.0,616.0 C1557.5,619.7 1567.2,625.2 1575.0,630.0 C1582.8,634.8 1589.2,642.5 1592.0,645.0 L1560.0,660.0 C1550.0,658.7 1520.0,652.8 1500.0,652.0 C1480.0,651.2 1450.0,654.5 1440.0,655.0 Z" fill="#88b2d1" stroke="#1b2229" stroke-width="1.3" stroke-linejoin="round" /><path d="M1516.0,621.0 L1520.0,620.0 L1547.0,627.0 L1540.0,633.0 Z" fill="#4f6679" stroke="#1b2229" stroke-width="0.9" stroke-linejoin="round" /><path d="M1434.0,638.0 L1446.0,632.0 L1450.0,640.0 L1440.0,644.0 Z" fill="#4f6679" stroke="#1b2229" stroke-width="0.9" stroke-linejoin="round" /><path d="M1540.0,634.0 C1542.7,631.7 1548.4,623.1 1556.0,620.4 C1563.6,617.7 1574.0,617.9 1585.7,618.0 C1597.4,618.1 1611.8,617.6 1626.0,621.0 C1640.2,624.4 1663.2,635.5 1670.6,638.4 L1658.4,684.9 C1653.6,682.5 1638.7,673.5 1629.8,670.2 C1620.9,666.9 1613.5,665.0 1605.3,665.3 C1597.1,665.6 1588.3,668.5 1580.8,671.8 C1573.3,675.1 1563.8,682.7 1560.4,684.9 L1540.0,690.0 Z" fill="#4e6477" stroke="#1b2229" stroke-width="1.3" stroke-linejoin="round" /><path d="M1620.0,617.5 C1624.2,618.6 1636.3,620.9 1645.0,624.0 C1653.7,627.1 1667.5,634.0 1672.0,636.0 L1670.0,640.0 C1665.8,638.1 1653.0,631.5 1645.0,628.5 C1637.0,625.5 1625.8,623.1 1622.0,622.0 Z" fill="#8cb8d8" stroke="#1b2229" stroke-width="0.8" stroke-linejoin="round" /><path d="M1432.0,455.0 L1525.0,455.0 L1517.0,545.0 L1448.0,545.0 Z" fill="#5f819c" stroke="none" /><path d="M1449.0,528.0 L1431.2,604.0 C1434.3,606.7 1443.0,616.5 1450.0,620.0 C1457.0,623.5 1465.4,625.1 1472.9,625.3 C1480.4,625.5 1488.2,624.2 1495.0,621.0 C1501.8,617.8 1510.6,608.5 1513.7,606.0 L1515.6,524.0 C1510.2,525.0 1494.1,529.3 1483.0,530.0 C1471.9,530.7 1454.7,528.3 1449.0,528.0 Z" fill="url(#gCol)" stroke="#1b2229" stroke-width="1.3" stroke-linejoin="round" /><path d="M1410.0,498.0 C1412.1,496.7 1417.5,492.3 1422.5,490.0 C1427.5,487.7 1430.8,485.5 1440.0,484.0 C1449.2,482.5 1465.5,481.3 1478.0,481.0 C1490.5,480.7 1505.1,481.5 1515.0,482.0 C1524.9,482.5 1531.4,482.8 1537.2,484.1 C1543.0,485.4 1547.9,489.0 1550.0,490.0 C1546.7,493.7 1537.5,507.3 1530.0,512.0 C1522.5,516.7 1509.2,517.0 1505.0,518.0 C1500.5,518.5 1487.2,520.8 1478.0,521.0 C1468.8,521.2 1458.8,520.5 1450.0,519.0 C1441.2,517.5 1429.2,513.2 1425.0,512.0 Z" fill="#86b0cf" stroke="#1b2229" stroke-width="1.3" stroke-linejoin="round" /><path d="M1472.5,497.8 C1475.1,497.7 1482.6,497.5 1488.0,497.0 C1493.4,496.5 1502.0,495.2 1504.8,494.9 L1504.8,517.4 C1502.0,517.8 1493.4,519.0 1488.0,519.5 C1482.6,520.0 1475.1,520.2 1472.5,520.3 Z" fill="url(#gCyl)" stroke="#1b2229" stroke-width="1.1" stroke-linejoin="round" /><path d="M1436.3,476.0  C1436.3,476.8 1433.7,478.7 1436.3,481.0 C1438.9,483.3 1445.0,487.9 1452.0,490.0 C1459.0,492.1 1469.9,493.4 1478.4,493.4 C1486.9,493.4 1496.5,492.1 1503.0,490.0 C1509.5,487.9 1515.2,482.5 1517.6,481.0 L1517.6,476.0 Z" fill="url(#gCyl)" stroke="#1b2229" stroke-width="1.3" stroke-linejoin="round" /><path d="M1430.4,436.0  L1430.4,462.0 C1432.8,464.2 1437.0,471.8 1445.0,475.0 C1453.0,478.2 1467.6,481.2 1478.4,481.2 C1489.2,481.2 1502.1,478.2 1510.0,475.0 C1517.9,471.8 1523.2,464.2 1525.9,462.0 L1525.9,436.0 Z" fill="url(#gCyl)" stroke="#1b2229" stroke-width="1.3" stroke-linejoin="round" /><ellipse cx="1478.2" cy="435.2" rx="47.8" ry="23.8" fill="#8bb8d8" stroke="#1b2229" stroke-width="1.2" transform="rotate(0 1478.2 435.2)"/><ellipse cx="1411.8" cy="478.2" rx="11.5" ry="10.58" fill="#7fa8c6" stroke="#1b2229" stroke-width="1.2" transform="rotate(0 1411.8 478.2)"/><ellipse cx="1413.18" cy="478.2" rx="7.13" ry="6.67" fill="#5b7e99" stroke="#1b2229" stroke-width="1.2" transform="rotate(0 1413.18 478.2)"/><ellipse cx="1530.3" cy="465.5" rx="5" ry="9" fill="#86b0cf" stroke="#1b2229" stroke-width="1.1" transform="rotate(20 1530.3 465.5)"/><path d="M1380.0,478.0 L1427.0,451.0 L1436.0,473.0 L1396.0,505.0 Z" fill="#4f6679" stroke="#1b2229" stroke-width="1.3" stroke-linejoin="round" /><path d="M1304.0,524.0 L1380.0,479.0 L1396.0,510.0 L1324.0,566.0 Z" fill="#4e6477" stroke="#1b2229" stroke-width="1.3" stroke-linejoin="round" /><ellipse cx="1386" cy="494" rx="8" ry="16" fill="#86b0ce" stroke="#1b2229" stroke-width="1.2" transform="rotate(-32 1386 494)"/><ellipse cx="1388" cy="495" rx="5" ry="13" fill="#4f6679" stroke="#1b2229" stroke-width="0.9" transform="rotate(-32 1388 495)"/><ellipse cx="1411.6" cy="478" rx="11.4" ry="10.488000000000001" fill="#7ca6c4" stroke="#1b2229" stroke-width="1.2" transform="rotate(0 1411.6 478)"/><ellipse cx="1412.9679999999998" cy="478" rx="7.0680000000000005" ry="6.612" fill="#587b96" stroke="#1b2229" stroke-width="1.2" transform="rotate(0 1412.9679999999998 478)"/><ellipse cx="1300.9" cy="548.5" rx="17.3" ry="15.916000000000002" fill="#7ca6c4" stroke="#1b2229" stroke-width="1.2" transform="rotate(0 1300.9 548.5)"/><ellipse cx="1302.976" cy="548.5" rx="10.726" ry="10.033999999999999" fill="#577a95" stroke="#1b2229" stroke-width="1.2" transform="rotate(0 1302.976 548.5)"/><path d="M1525.0,502.0 L1549.6,482.4 L1580.0,550.0 L1557.8,566.0 Z" fill="#4e6477" stroke="#1b2229" stroke-width="1.3" stroke-linejoin="round" /><path d="M1540.0,487.0 L1549.6,482.4 L1583.0,548.0 L1574.0,554.0 Z" fill="#8ab4d4" stroke="#1b2229" stroke-width="1" stroke-linejoin="round" /><ellipse cx="1423.5" cy="506.6" rx="7.5" ry="6.9" fill="#86b0cf" stroke="#1b2229" stroke-width="1.2" transform="rotate(0 1423.5 506.6)"/><ellipse cx="1424.4" cy="506.6" rx="4.65" ry="4.35" fill="#6b92ae" stroke="#1b2229" stroke-width="1.2" transform="rotate(0 1424.4 506.6)"/><path d="M1416.0,500.0 L1452.0,505.0 L1439.0,579.0 L1400.8,566.0 Z" fill="#88b2d1" stroke="#1b2229" stroke-width="1.1" stroke-linejoin="round" /><path d="M1436.0,502.0 L1420.0,570.0" fill="none" stroke="#1b2229" stroke-width="1.0"/><path d="M1426.0,501.0 L1409.0,568.0" fill="none" stroke="#1b2229" stroke-width="0.8"/><ellipse cx="1466.6" cy="514.5" rx="9" ry="8.280000000000001" fill="#86b0cf" stroke="#1b2229" stroke-width="1.2" transform="rotate(0 1466.6 514.5)"/><ellipse cx="1467.6799999999998" cy="514.5" rx="5.58" ry="5.22" fill="#6b92ae" stroke="#1b2229" stroke-width="1.2" transform="rotate(0 1467.6799999999998 514.5)"/><ellipse cx="1517.6" cy="510.5" rx="12" ry="11.040000000000001" fill="#86b0cf" stroke="#1b2229" stroke-width="1.2" transform="rotate(0 1517.6 510.5)"/><ellipse cx="1519.04" cy="510.5" rx="7.4399999999999995" ry="6.959999999999999" fill="#6b92ae" stroke="#1b2229" stroke-width="1.2" transform="rotate(0 1519.04 510.5)"/><path d="M1552.2,567.3 L1580.8,547.8 L1648.0,640.0 L1632.0,668.0 L1605.0,655.0 Z" fill="url(#gSleeve)" stroke="#1b2229" stroke-width="1.3" stroke-linejoin="round" /><path d="M1590.0,568.0 L1596.0,563.0 L1640.0,626.0 L1634.0,631.0 Z" fill="#3f5567" stroke="#1b2229" stroke-width="0.9" stroke-linejoin="round" /><path d="M1552.2,567.3 L1580.8,547.8" fill="none" stroke="#1b2229" stroke-width="1.6"/><ellipse cx="1620.8" cy="652.2" rx="18" ry="16.560000000000002" fill="#7fa9c7" stroke="#1b2229" stroke-width="1.2" transform="rotate(0 1620.8 652.2)"/><ellipse cx="1622.96" cy="652.2" rx="11.16" ry="10.44" fill="#587a94" stroke="#1b2229" stroke-width="1.2" transform="rotate(0 1622.96 652.2)"/><path d="M1372.0,655.0 L1392.0,652.0 L1402.0,698.0 L1380.0,690.0 Z" fill="#6d93b0" stroke="#1b2229" stroke-width="1" stroke-linejoin="round" /><ellipse cx="1362" cy="662" rx="7.5" ry="12" fill="#7ea8c6" stroke="#1b2229" stroke-width="1.2" transform="rotate(20 1362 662)"/><ellipse cx="1364" cy="662" rx="4" ry="8" fill="#5d809b" stroke="#1b2229" stroke-width="0.9" transform="rotate(20 1364 662)"/><path d="M1408.0,650.0 L1426.0,636.0 L1424.5,702.0 L1405.0,695.0 Z" fill="#7ea8c6" stroke="none" /><path d="M1376.0,578.0 L1400.0,566.0 L1390.0,678.0 L1352.0,662.0 L1362.0,636.0 Z" fill="#6d93b0" stroke="#1b2229" stroke-width="1.3" stroke-linejoin="round" /><path d="M1383.0,590.0 L1393.0,587.0 L1373.0,652.0 L1366.0,650.0 Z" fill="#4a6375" stroke="#1b2229" stroke-width="0.9" stroke-linejoin="round" /><path d="M1399.0,566.0 L1439.0,581.0 L1413.0,676.0 L1389.0,678.0 Z" fill="url(#gSleeve)" stroke="#1b2229" stroke-width="1.3" stroke-linejoin="round" /><path d="M1457.2,641.6 C1460.2,642.3 1467.9,645.3 1475.0,646.0 C1482.1,646.7 1492.9,647.0 1500.0,646.0 C1507.1,645.0 1514.8,641.0 1517.7,640.0 L1517.7,695.0 C1513.1,695.8 1500.1,699.7 1490.0,700.0 C1479.9,700.3 1462.7,697.5 1457.2,697.0 Z" fill="url(#gCyl)" stroke="#1b2229" stroke-width="1.3" stroke-linejoin="round" /><path d="M1423.0,654.8 L1457.2,641.6 L1457.2,699.8 L1432.4,718.4 L1423.0,713.7 Z" fill="#6f96b4" stroke="#1b2229" stroke-width="1.3" stroke-linejoin="round" /><path d="M1423.0,654.8 L1432.0,657.0 L1432.4,718.4 L1423.0,713.7 Z" fill="#4f6679" stroke="#1b2229" stroke-width="1" stroke-linejoin="round" /><ellipse cx="1447.3" cy="680.6" rx="10.5" ry="13.5" fill="#86b0cf" stroke="#1b2229" stroke-width="1.2" transform="rotate(12 1447.3 680.6)"/><ellipse cx="1449" cy="681" rx="5" ry="8.5" fill="#7aa3c1" stroke="#1b2229" stroke-width="1" transform="rotate(12 1449 681)"/><path d="M1398.0,688.0 L1415.0,690.0 L1415.0,710.0 L1398.0,708.0 Z" fill="#5f819c" stroke="#1b2229" stroke-width="1" stroke-linejoin="round" /><ellipse cx="1401" cy="678" rx="10.5" ry="13" fill="#86b0cf" stroke="#1b2229" stroke-width="1.2" transform="rotate(12 1401 678)"/><ellipse cx="1402.5" cy="678.5" rx="5" ry="8.5" fill="#7aa3c1" stroke="#1b2229" stroke-width="1" transform="rotate(12 1402.5 678.5)"/><path d="M1517.7,636.2 L1561.1,642.4 L1559.6,704.4 L1553.4,705.2 L1517.7,689.0 Z" fill="#5b7c96" stroke="#1b2229" stroke-width="1.3" stroke-linejoin="round" /><path d="M1517.7,636.2 L1561.1,642.4 L1552.0,646.0 L1517.7,640.0 Z" fill="#8ab4d3" stroke="#1b2229" stroke-width="1" stroke-linejoin="round" /><ellipse cx="1534.8" cy="671.8" rx="15.5" ry="14.26" fill="#5d809b" stroke="#1b2229" stroke-width="1.2" transform="rotate(0 1534.8 671.8)"/><ellipse cx="1536.6599999999999" cy="671.8" rx="9.61" ry="8.99" fill="#4f6a80" stroke="#1b2229" stroke-width="1.2" transform="rotate(0 1536.6599999999999 671.8)"/><path d="M1560.0,690.0 L1572.0,685.0 L1572.0,700.0 L1560.0,705.0 Z" fill="#5b7c96" stroke="#1b2229" stroke-width="1" stroke-linejoin="round" /><path d="M1335.7,665.1 L1380.0,680.0 C1375.0,687.1 1359.3,707.2 1350.0,722.9 C1340.7,738.6 1331.9,755.7 1324.3,774.3 C1316.7,792.9 1309.3,814.8 1304.3,834.3 C1299.3,853.8 1295.5,874.3 1294.3,891.4 C1293.1,908.5 1295.2,923.8 1297.1,937.1 C1299.0,950.4 1304.3,965.7 1305.7,971.4 L1257.1,955.7 C1255.7,948.3 1250.3,925.9 1248.6,911.4 C1246.9,896.9 1245.4,885.3 1247.1,868.6 C1248.8,851.9 1253.3,830.5 1258.6,811.4 C1263.8,792.3 1271.5,771.9 1278.6,754.3 C1285.7,736.7 1291.9,720.6 1301.4,705.7 C1310.9,690.8 1330.0,671.9 1335.7,665.1 Z" fill="url(#gFLC)" stroke="#1b2229" stroke-width="1.3" stroke-linejoin="round" /><path d="M1380.0,680.0 L1378.6,754.3 C1376.7,754.8 1371.9,753.8 1367.1,757.1 C1362.3,760.4 1355.7,766.7 1350.0,774.3 C1344.3,781.9 1337.4,791.9 1332.9,802.9 C1328.4,813.9 1324.6,833.8 1322.9,840.0 L1325.7,868.6 C1323.8,873.4 1317.4,886.6 1314.3,897.1 C1311.2,907.6 1308.5,919.0 1307.1,931.4 C1305.7,943.8 1305.9,964.7 1305.7,971.4 C1304.3,965.7 1299.0,950.4 1297.1,937.1 C1295.2,923.8 1293.1,908.5 1294.3,891.4 C1295.5,874.3 1299.3,853.8 1304.3,834.3 C1309.3,814.8 1316.7,792.9 1324.3,774.3 C1331.9,755.7 1340.7,738.6 1350.0,722.9 C1359.3,707.2 1375.0,687.1 1380.0,680.0 Z" fill="#7aa2c0" stroke="#1b2229" stroke-width="1.3" stroke-linejoin="round" /><path d="M1658.6,650.0 C1659.1,650.0 1654.7,646.9 1661.4,650.0 C1668.1,653.1 1686.7,660.8 1698.6,668.6 C1710.5,676.5 1722.4,686.6 1732.9,697.1 C1743.4,707.6 1753.3,719.0 1761.4,731.4 C1769.5,743.8 1776.2,758.1 1781.4,771.4 C1786.7,784.7 1790.5,799.5 1792.9,811.4 C1795.3,823.3 1796.2,832.9 1795.7,842.9 C1795.2,852.9 1794.8,858.5 1790.0,871.4 C1785.2,884.2 1770.9,911.9 1767.1,920.0 C1767.1,912.4 1769.0,886.7 1767.1,874.3 C1765.2,861.9 1760.0,854.3 1755.7,845.7 C1751.4,837.1 1743.8,826.7 1741.4,822.9 C1742.4,818.1 1748.5,804.3 1747.1,794.3 C1745.7,784.3 1739.1,772.4 1732.9,762.9 C1726.7,753.4 1718.6,743.8 1710.0,737.1 C1701.4,730.4 1690.0,725.0 1681.4,722.9 C1672.8,720.8 1662.4,724.1 1658.6,724.3 L1658.6,650.0 Z" fill="#4e6477" stroke="#1b2229" stroke-width="1.3" stroke-linejoin="round" /><path d="M1661.4,650.0 L1687.1,626.3 C1693.8,630.0 1714.7,639.6 1727.1,648.6 C1739.5,657.6 1751.4,669.0 1761.4,680.0 C1771.4,691.0 1779.5,701.9 1787.1,714.3 C1794.7,726.7 1801.6,740.0 1807.1,754.3 C1812.6,768.6 1817.6,786.7 1820.0,800.0 C1822.4,813.3 1822.1,822.9 1821.4,834.3 C1820.7,845.7 1819.0,859.1 1815.7,868.6 C1812.4,878.1 1809.5,882.8 1801.4,891.4 C1793.3,900.0 1772.8,915.2 1767.1,920.0 C1770.9,911.9 1785.2,884.2 1790.0,871.4 C1794.8,858.5 1795.2,852.9 1795.7,842.9 C1796.2,832.9 1795.3,823.3 1792.9,811.4 C1790.5,799.5 1786.7,784.7 1781.4,771.4 C1776.2,758.1 1769.5,743.8 1761.4,731.4 C1753.3,719.0 1743.4,707.6 1732.9,697.1 C1722.4,686.6 1710.5,676.5 1698.6,668.6 C1686.7,660.8 1667.6,653.1 1661.4,650.0 Z" fill="url(#gFRC)" stroke="#1b2229" stroke-width="1.3" stroke-linejoin="round" /></svg>
<svg class="a" style="left:2280px;top:110px" width="279" height="660" viewBox="2280 110 279 660"><polygon fill="#e1e8ef" points="2415,147.5 2437,147.5 2426,132"/><polygon fill="#e1e8ef" points="2415,342.5 2437,342.5 2426,357"/><polygon fill="#e1e8ef" points="2328.5,233.4 2328.5,256.5 2313,245"/><polygon fill="#e1e8ef" points="2523.5,233.4 2523.5,256.5 2538,245"/><path d="M2395,148 C2380,152 2365,162 2354,174" fill="none" stroke="#e1e8ef" stroke-width="5.5"/><polygon fill="#e1e8ef" points="2345,182 2346,166 2362,176"/><path d="M2457,148 C2472,152 2487,162 2498,174" fill="none" stroke="#e1e8ef" stroke-width="5.5"/><polygon fill="#e1e8ef" points="2507,182 2506,166 2490,176"/><path d="M2412,184 C2420,180 2430,180 2440,183 L2478,197 C2484,200 2486,206 2486,212 L2486,262 C2486,268 2482,273 2477,277 L2446,300 C2438,306 2428,307 2420,304 L2381,290 C2373,287 2368,282 2368,274 L2368,226 C2368,218 2372,213 2378,208 Z" fill="#e1e8ef"/><path d="M2388,212 C2395,203 2405,197 2415,196 L2452,197 C2462,198 2466,203 2462,208 L2447,225 C2440,232 2430,235 2420,233 L2395,226 C2386,223 2384,217 2388,212 Z" fill="#fff"/><path d="M2378,240 C2378,232 2384,229 2392,232 L2430,245 C2437,248 2441,255 2441,262 L2441,283 C2441,292 2436,297 2428,294 L2388,280 C2381,277 2378,271 2378,264 Z" fill="#fff"/><path d="M2452,246 C2452,238 2457,233 2464,228 C2474,222 2481,222 2481,232 L2481,259 C2481,266 2477,272 2470,277 C2460,284 2452,285 2452,275 Z" fill="#fff"/><ellipse cx="2371" cy="225" rx="3.5" ry="6" fill="#fff" transform="rotate(25 2371 225)"/><circle cx="2439" cy="238" r="8" fill="#fff"/><ellipse cx="2437" cy="299" rx="7" ry="3.5" fill="#fff" transform="rotate(-15 2437 299)"/><text x="0" y="0" font-family="Liberation Sans" font-style="italic" font-size="12" fill="#666" transform="translate(2412,209) rotate(18) skewX(-20)">Top</text><text x="0" y="0" font-family="Liberation Sans" font-size="17" fill="#555" transform="translate(2386,268) rotate(13)">Front</text><text x="0" y="0" font-family="Liberation Sans" font-size="13" fill="#666" transform="translate(2457,269) rotate(-62)">Right</text><path d="M2363.3,293 L2363.3,217" stroke="#3b3bd6" stroke-width="1.6"/><path d="M2363.3,293 L2440,315" stroke="#d43a3a" stroke-width="1.6"/><path d="M2363.3,293 L2407.8,254" stroke="#5cb85c" stroke-width="1.6"/><text x="2357" y="211" font-family="Liberation Sans" font-size="16" fill="#3b3bd6">Z</text><text x="2446" y="326" font-family="Liberation Sans" font-size="16" fill="#d43a3a">X</text><text x="2408" y="254" font-family="Liberation Sans" font-size="13" fill="#7cc47c">Y</text><polygon points="2480,337 2493,330.5 2506,337 2506,351 2493,357.5 2480,351" fill="#fff" stroke="#222" stroke-width="1.5"/><polygon points="2480.8,337.6 2493,343.6 2493,356.8 2480.8,350.6" fill="#999"/><polygon points="2493,343.6 2505.2,337.6 2505.2,350.6 2493,356.8" fill="#ddd"/><path d="M2480,337 L2493,343.6 L2506,337 M2493,343.6 L2493,357.5" fill="none" stroke="#222" stroke-width="1.3"/><polygon fill="#222" points="2519,340.5 2530.8,340.5 2525,347"/><path d="M2559,512.5 L2513.5,512.5 L2513.5,760 L2559,760" fill="#fff" stroke="#b5b5b5" stroke-width="1"/><path d="M2513.5,562.5 L2559,562.5" stroke="#b5b5b5" stroke-width="1"/><path d="M2513.5,611.5 L2559,611.5" stroke="#b5b5b5" stroke-width="1"/><path d="M2513.5,661.5 L2559,661.5" stroke="#b5b5b5" stroke-width="1"/><path d="M2513.5,710.5 L2559,710.5" stroke="#b5b5b5" stroke-width="1"/><rect x="2524.5" y="525.5" width="26" height="26" rx="4" fill="none" stroke="#333" stroke-width="1.8"/><path d="M2528.5,531 L2545,531 M2531,535.5 L2546,535.5 M2531,540 L2546,540 M2533,545 L2546,545" stroke="#333" stroke-width="2"/><rect x="2522.5" y="573.5" width="14" height="11" fill="#1b50b2"/><path d="M2522.5,577 L2536.5,577 M2522.5,580.5 L2536.5,580.5 M2527,573.5 L2527,584.5 M2531.5,573.5 L2531.5,584.5" stroke="#fff" stroke-width="0.9"/><polygon points="2528.5,588 2539,581.5 2550,587 2550,598 2539,603.5 2528.5,598" fill="#fff" stroke="#222" stroke-width="1.6"/><path d="M2528.5,588 L2539,593.5 L2550,587 M2539,593.5 L2539,603.5" fill="none" stroke="#222" stroke-width="1.4"/><polygon points="2523,626.5 2527,624.5 2531,626.5 2531,631.5 2527,633.5 2523,631.5" fill="#ccc" stroke="#666" stroke-width="1"/><path d="M2528,636 L2528,638.5 L2536,638.5 L2536,641" fill="none" stroke="#1b50b2" stroke-width="1.4" stroke-dasharray="2.2,1.5"/><path d="M2543,636 L2546,636 L2550,640 L2550,652 L2537,652 L2533,648 L2533,643 L2543,643 Z" fill="#fff" stroke="#444" stroke-width="1.3"/><path d="M2533,643 L2537,647 L2546,647 L2546,640 L2543,636 M2537,647 L2537,652 M2546,640 L2550,640" fill="none" stroke="#777" stroke-width="0.9"/><rect x="2538.5" y="674.5" width="12" height="22" fill="none" stroke="#1b50b2" stroke-width="1.6" stroke-dasharray="3,2"/><rect x="2523.5" y="693" width="27" height="9.5" fill="#fff" stroke="#222" stroke-width="1.6"/><circle cx="2544.5" cy="697.5" r="6" fill="#fff" stroke="#1b50b2" stroke-width="1.6"/><circle cx="2544.5" cy="697.5" r="2.6" fill="none" stroke="#444" stroke-width="1.4"/><path d="M2523.5,693 L2544.5,693" stroke="#222" stroke-width="1.6"/><rect x="2521.5" y="721.5" width="13" height="10" fill="#333"/><path d="M2521.5,724.8 L2534.5,724.8 M2521.5,728.1 L2534.5,728.1 M2525.8,721.5 L2525.8,731.5 M2530.2,721.5 L2530.2,731.5" stroke="#fff" stroke-width="0.8"/><path d="M2525,731 C2521,736 2521,744 2525,749" fill="none" stroke="#222" stroke-width="2.6"/><path d="M2549,727 C2553.5,733 2553.5,743 2549,749" fill="none" stroke="#222" stroke-width="2.4"/><path d="M2528.5,733 C2534,731 2536,741 2543,745.5 M2546,733.5 C2540,735 2534.5,742 2528.5,746" fill="none" stroke="#222" stroke-width="3.2" stroke-linecap="round"/></svg>
<svg class="a" style="left:1840px;top:70px" width="40" height="30" viewBox="1840 70 40 30"><path d="M1852.3,81.6 L1855.8,81.6 L1860.2,88.6 L1864.3,88.6 M1858.6,81.6 L1864.3,81.6" fill="none" stroke="#333" stroke-width="1.3"/></svg>
</body></html>
